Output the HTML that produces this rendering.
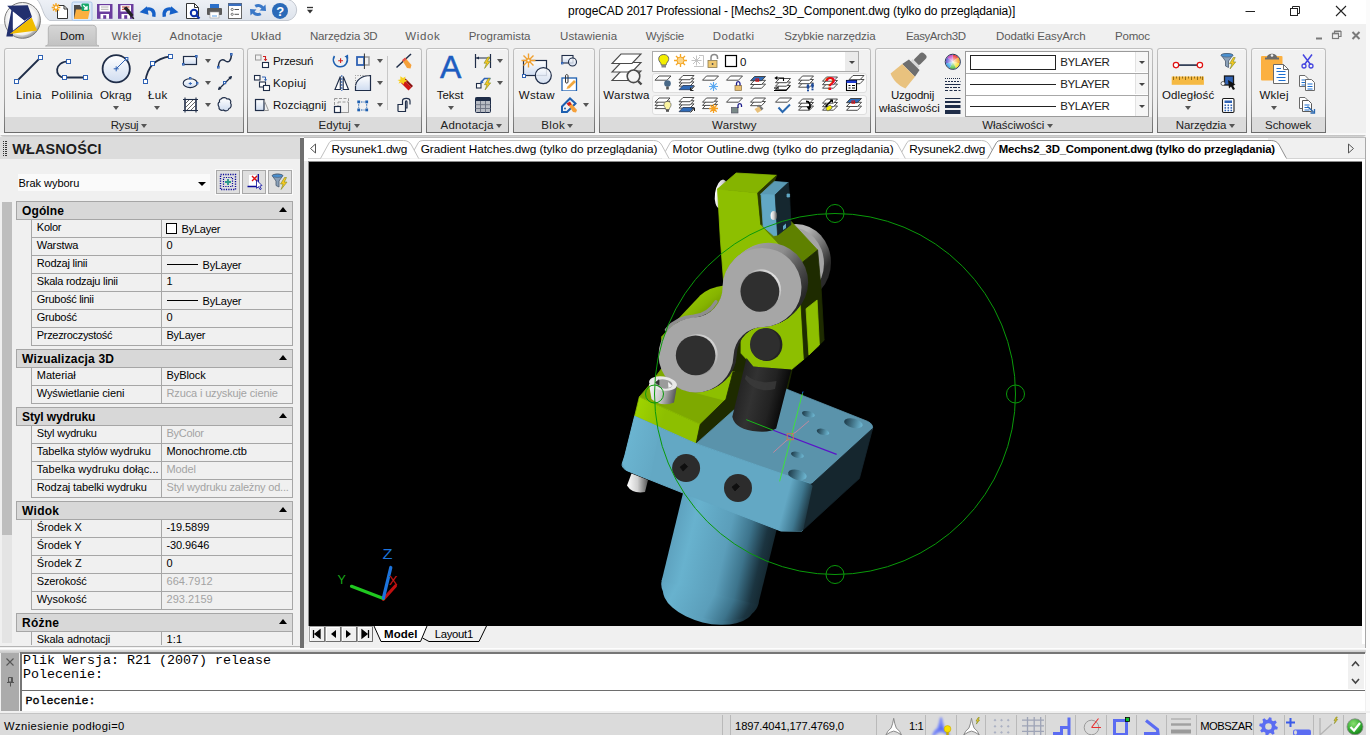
<!DOCTYPE html>
<html lang="pl">
<head>
<meta charset="utf-8">
<title>progeCAD 2017 Professional</title>
<style>
*{box-sizing:border-box;margin:0;padding:0}
html,body{width:1370px;height:735px;overflow:hidden}
body{position:relative;background:#f0f0f0;font-family:"Liberation Sans",sans-serif;font-size:12px;color:#000}
.abs{position:absolute}
#titlebar{position:absolute;left:0;top:0;width:1370px;height:24px;background:#fff}
#title{position:absolute;left:567px;top:3px;font-size:12.4px;white-space:nowrap;color:#000}
#qat{position:absolute;left:38px;top:-6px;width:252px;height:28px;border:1px solid #b9c0cc;border-radius:0 14px 14px 0;background:linear-gradient(#f4f7fb,#dde4ee)}
#tabs{position:absolute;left:0;top:24px;width:1366px;height:24px;background:#f0f0f0}
.rt{position:absolute;top:29px;font-size:12.3px;color:#5a5a5a;white-space:nowrap}
#domtab{position:absolute;left:48px;top:25px;width:49px;height:21px;background:linear-gradient(#d9d9d9,#c9c9c9);border:1px solid #bcbcbc;border-bottom:none;border-radius:4px 4px 0 0}
.panel{position:absolute;top:48px;height:85px;border:1px solid #c0c0c0;border-bottom-color:#6c6c6c;border-radius:3px 3px 0 0;background:#f1f1f1;box-shadow:inset 0 1px 0 #fbfbfb}
.panel::before,.panel::after{content:'';position:absolute;top:3px;bottom:-1px;width:1px;background:linear-gradient(#c0c0c0 0%,#a6a6a6 55%,#6c6c6c 100%)}
.panel::before{left:-1px}.panel::after{right:-1px}
.panel .pt{position:absolute;left:0;right:0;bottom:0;height:15px;background:#dbdbdb;text-align:center;font-size:12.3px;line-height:15px;color:#222;white-space:nowrap}
.lbl{position:absolute;font-size:12.3px;white-space:nowrap;color:#111}
.dd{position:absolute;width:0;height:0;border-left:3px solid transparent;border-right:3px solid transparent;border-top:4px solid #555}
#ribbonbottom{position:absolute;left:0;top:133px;width:1366px;height:4px;background:linear-gradient(#f6f6f6 0,#fafafa 45%,#c4c4c4 60%,#d6d6d6 100%);border-radius:0 0 4px 4px}
/* properties */
#props{position:absolute;left:0;top:138px;width:300px;height:510px;background:#f0f0f0}
#ptitle{position:absolute;left:12px;top:3px;font-weight:bold;font-size:13.6px;color:#222}
.ph{position:absolute;left:16px;width:277px;height:18px;background:#d9d9d9;border:1px solid #a9a9a9;font-weight:bold;font-size:11.6px;line-height:16px;padding-left:6px}
.pr{position:absolute;left:30px;width:263px;height:18px;border:1px solid #a9a9a9;border-top:none;font-size:11.1px;line-height:17px;background:#f0f0f0}
.pr .k{position:absolute;left:6px;top:0;white-space:nowrap;letter-spacing:-0.2px}
.pr .v{position:absolute;left:131px;top:0;width:131px;height:17px;border-left:1px solid #a9a9a9;padding-left:5px;white-space:nowrap;overflow:hidden;letter-spacing:-0.2px}
.pr .g{color:#a0a0a0}
.tri{position:absolute;right:5px;top:5px;width:0;height:0;border-left:4px solid transparent;border-right:4px solid transparent;border-bottom:5px solid #000}
/* doc tabs */
#doctabs{position:absolute;left:308px;top:138px;width:1054px;height:23px;background:#f0f0f0}
.dt{position:absolute;top:142px;font-size:12.3px;white-space:nowrap;color:#000}
#viewport{position:absolute;left:309px;top:162px;width:1053px;height:464px;background:#000;overflow:hidden}
#laytabs{position:absolute;left:311px;top:626px;width:1050px;height:17px;background:#f0f0f0}
#cmd{position:absolute;left:18px;top:652px;width:1347px;height:60px;background:#fff;border-top:1px solid #8a8a8a}
.mono{font-family:"Liberation Mono",monospace}
#status{position:absolute;left:0;top:715px;width:1370px;height:20px;background:#dcdcdc}
</style>
</head>
<body>
<div id="titlebar"></div>
<span class="abs" style="left:568.1px;top:3.0px;font:normal 12px 'Liberation Sans',sans-serif;line-height:16px;letter-spacing:-0.109px;color:#000;white-space:nowrap;">progeCAD 2017 Professional - [Mechs2_3D_Component.dwg (tylko do przeglądania)]</span>
<svg class="abs" style="left:0;top:0" width="320" height="24" viewBox="0 0 320 24"><defs><linearGradient id="qg" x1="0" y1="0" x2="0" y2="1"><stop offset="0" stop-color="#eef1f6"/><stop offset="1" stop-color="#dde3ec"/></linearGradient></defs><path d="M36.500 -1 C43 5 42 16 49.500 20.500 H288 A10.700 10.700 0 0 0 288 -0.500 Z" fill="url(#qg)" stroke="#c3c8d0" stroke-width="1"/></svg>
<div id="tabs"></div><div class="abs" style="left:1366px;top:0;width:4px;height:735px;background:#fbfbfb"></div>
<svg class="abs" style="left:40px;top:22px" width="64" height="26" viewBox="40 22 64 26"><defs><linearGradient id="dg" x1="0" y1="0" x2="0" y2="1"><stop offset="0" stop-color="#d6d6d6"/><stop offset="1" stop-color="#c2c2c2"/></linearGradient></defs><path d="M45.500 46 C48 45.500 48.300 44 48.300 42 V29 C48.300 26.500 49.500 25.300 52 25.300 H92.500 C95 25.300 96.200 26.500 96.200 29 V42 C96.200 44 96.500 45.500 99 46 Z" fill="url(#dg)" stroke="#b4b4b4" stroke-width="1"/></svg>
<span class="abs" style="left:60.1px;top:28.5px;font:normal 11.5px 'Liberation Sans',sans-serif;line-height:15px;letter-spacing:0.006px;color:#111;white-space:nowrap;">Dom</span>
<span class="abs" style="left:111.5px;top:28.5px;font:normal 11.5px 'Liberation Sans',sans-serif;line-height:15px;letter-spacing:0.355px;color:#5b5b5b;white-space:nowrap;">Wklej</span>
<span class="abs" style="left:169.6px;top:28.5px;font:normal 11.5px 'Liberation Sans',sans-serif;line-height:15px;letter-spacing:0.216px;color:#5b5b5b;white-space:nowrap;">Adnotacje</span>
<span class="abs" style="left:250.8px;top:28.5px;font:normal 11.5px 'Liberation Sans',sans-serif;line-height:15px;letter-spacing:0.259px;color:#5b5b5b;white-space:nowrap;">Układ</span>
<span class="abs" style="left:310.0px;top:28.5px;font:normal 11.5px 'Liberation Sans',sans-serif;line-height:15px;letter-spacing:-0.181px;color:#5b5b5b;white-space:nowrap;">Narzędzia 3D</span>
<span class="abs" style="left:405.3px;top:28.5px;font:normal 11.5px 'Liberation Sans',sans-serif;line-height:15px;letter-spacing:0.609px;color:#5b5b5b;white-space:nowrap;">Widok</span>
<span class="abs" style="left:468.7px;top:28.5px;font:normal 11.5px 'Liberation Sans',sans-serif;line-height:15px;letter-spacing:-0.018px;color:#5b5b5b;white-space:nowrap;">Programista</span>
<span class="abs" style="left:560.0px;top:28.5px;font:normal 11.5px 'Liberation Sans',sans-serif;line-height:15px;letter-spacing:0.095px;color:#5b5b5b;white-space:nowrap;">Ustawienia</span>
<span class="abs" style="left:645.7px;top:28.5px;font:normal 11.5px 'Liberation Sans',sans-serif;line-height:15px;letter-spacing:-0.174px;color:#5b5b5b;white-space:nowrap;">Wyjście</span>
<span class="abs" style="left:712.8px;top:28.5px;font:normal 11.5px 'Liberation Sans',sans-serif;line-height:15px;letter-spacing:0.386px;color:#5b5b5b;white-space:nowrap;">Dodatki</span>
<span class="abs" style="left:784.3px;top:28.5px;font:normal 11.5px 'Liberation Sans',sans-serif;line-height:15px;letter-spacing:-0.131px;color:#5b5b5b;white-space:nowrap;">Szybkie narzędzia</span>
<span class="abs" style="left:906.0px;top:28.5px;font:normal 11.5px 'Liberation Sans',sans-serif;line-height:15px;letter-spacing:-0.442px;color:#5b5b5b;white-space:nowrap;">EasyArch3D</span>
<span class="abs" style="left:996.0px;top:28.5px;font:normal 11.5px 'Liberation Sans',sans-serif;line-height:15px;letter-spacing:-0.125px;color:#5b5b5b;white-space:nowrap;">Dodatki EasyArch</span>
<span class="abs" style="left:1114.9px;top:28.5px;font:normal 11.5px 'Liberation Sans',sans-serif;line-height:15px;letter-spacing:-0.159px;color:#5b5b5b;white-space:nowrap;">Pomoc</span>
<div class="panel" style="left:4px;width:240px"><div class="pt"></div></div><span class="abs" style="left:110.8px;top:117.9px;font:normal 11.5px 'Liberation Sans',sans-serif;line-height:15px;letter-spacing:-0.233px;color:#222;white-space:nowrap;">Rysuj</span><i class="abs" style="left:140.7px;top:123.5px;width:0;height:0;border-left:3px solid transparent;border-right:3px solid transparent;border-top:4px solid #555"></i><span class="abs" style="left:16.1px;top:87.5px;font:normal 11.5px 'Liberation Sans',sans-serif;line-height:15px;letter-spacing:0.257px;color:#111;white-space:nowrap;">Linia</span><span class="abs" style="left:51.3px;top:87.5px;font:normal 11.5px 'Liberation Sans',sans-serif;line-height:15px;letter-spacing:0.229px;color:#111;white-space:nowrap;">Polilinia</span><span class="abs" style="left:100.0px;top:87.5px;font:normal 11.5px 'Liberation Sans',sans-serif;line-height:15px;letter-spacing:0.074px;color:#111;white-space:nowrap;">Okrąg</span><span class="abs" style="left:148.1px;top:87.5px;font:normal 11.5px 'Liberation Sans',sans-serif;line-height:15px;letter-spacing:0.318px;color:#111;white-space:nowrap;">Łuk</span><i class="abs" style="left:112.5px;top:106.0px;width:0;height:0;border-left:3px solid transparent;border-right:3px solid transparent;border-top:4px solid #555"></i><i class="abs" style="left:154.0px;top:106.0px;width:0;height:0;border-left:3px solid transparent;border-right:3px solid transparent;border-top:4px solid #555"></i><i class="abs" style="left:204.5px;top:59.0px;width:0;height:0;border-left:3px solid transparent;border-right:3px solid transparent;border-top:4px solid #555"></i><i class="abs" style="left:204.5px;top:81.0px;width:0;height:0;border-left:3px solid transparent;border-right:3px solid transparent;border-top:4px solid #555"></i><i class="abs" style="left:204.5px;top:103.0px;width:0;height:0;border-left:3px solid transparent;border-right:3px solid transparent;border-top:4px solid #555"></i>
<div class="panel" style="left:247px;width:175px"><div class="pt"></div></div><span class="abs" style="left:318.6px;top:117.9px;font:normal 11.5px 'Liberation Sans',sans-serif;line-height:15px;letter-spacing:0.055px;color:#222;white-space:nowrap;">Edytuj</span><i class="abs" style="left:354.3px;top:123.5px;width:0;height:0;border-left:3px solid transparent;border-right:3px solid transparent;border-top:4px solid #555"></i><span class="abs" style="left:273.0px;top:53.5px;font:normal 11.5px 'Liberation Sans',sans-serif;line-height:15px;letter-spacing:-0.312px;color:#111;white-space:nowrap;">Przesuń</span><span class="abs" style="left:273.0px;top:75.5px;font:normal 11.5px 'Liberation Sans',sans-serif;line-height:15px;letter-spacing:0.222px;color:#111;white-space:nowrap;">Kopiuj</span><span class="abs" style="left:273.0px;top:97.5px;font:normal 11.5px 'Liberation Sans',sans-serif;line-height:15px;letter-spacing:0.034px;color:#111;white-space:nowrap;">Rozciągnij</span><i class="abs" style="left:376.5px;top:59.0px;width:0;height:0;border-left:3px solid transparent;border-right:3px solid transparent;border-top:4px solid #555"></i><i class="abs" style="left:376.5px;top:81.0px;width:0;height:0;border-left:3px solid transparent;border-right:3px solid transparent;border-top:4px solid #555"></i><i class="abs" style="left:376.5px;top:103.0px;width:0;height:0;border-left:3px solid transparent;border-right:3px solid transparent;border-top:4px solid #555"></i><i class="abs" style="left:387px;top:56px;width:1px;height:54px;background:#c8c8c8"></i>
<div class="panel" style="left:426px;width:83px"><div class="pt"></div></div><span class="abs" style="left:440.5px;top:117.9px;font:normal 11.5px 'Liberation Sans',sans-serif;line-height:15px;letter-spacing:0.216px;color:#222;white-space:nowrap;">Adnotacja</span><i class="abs" style="left:496.2px;top:123.5px;width:0;height:0;border-left:3px solid transparent;border-right:3px solid transparent;border-top:4px solid #555"></i><span class="abs" style="left:436.8px;top:87.5px;font:normal 11.5px 'Liberation Sans',sans-serif;line-height:15px;letter-spacing:-0.069px;color:#111;white-space:nowrap;">Tekst</span><i class="abs" style="left:447.5px;top:106.0px;width:0;height:0;border-left:3px solid transparent;border-right:3px solid transparent;border-top:4px solid #555"></i><i class="abs" style="left:496.5px;top:59.0px;width:0;height:0;border-left:3px solid transparent;border-right:3px solid transparent;border-top:4px solid #555"></i><i class="abs" style="left:496.5px;top:81.0px;width:0;height:0;border-left:3px solid transparent;border-right:3px solid transparent;border-top:4px solid #555"></i><span class="abs" style="left:440.1px;top:46.0px;font:normal 32px 'Liberation Sans',sans-serif;line-height:42px;letter-spacing:2.256px;color:#1c5cc0;white-space:nowrap;-webkit-text-stroke:0.5px #1c5cc0;">A</span>
<div class="panel" style="left:512.5px;width:82px"><div class="pt"></div></div><span class="abs" style="left:541.2px;top:117.9px;font:normal 11.5px 'Liberation Sans',sans-serif;line-height:15px;letter-spacing:0.381px;color:#222;white-space:nowrap;">Blok</span><i class="abs" style="left:567.0px;top:123.5px;width:0;height:0;border-left:3px solid transparent;border-right:3px solid transparent;border-top:4px solid #555"></i><span class="abs" style="left:518.7px;top:87.5px;font:normal 11.5px 'Liberation Sans',sans-serif;line-height:15px;letter-spacing:0.360px;color:#111;white-space:nowrap;">Wstaw</span><i class="abs" style="left:582.5px;top:103.0px;width:0;height:0;border-left:3px solid transparent;border-right:3px solid transparent;border-top:4px solid #555"></i>
<div class="panel" style="left:598.5px;width:272px"><div class="pt"></div></div><span class="abs" style="left:712.1px;top:117.9px;font:normal 11.5px 'Liberation Sans',sans-serif;line-height:15px;letter-spacing:0.106px;color:#222;white-space:nowrap;">Warstwy</span><span class="abs" style="left:603.3px;top:87.5px;font:normal 11.5px 'Liberation Sans',sans-serif;line-height:15px;letter-spacing:0.298px;color:#111;white-space:nowrap;">Warstwa</span><div class="abs" style="left:652px;top:51px;width:207px;height:21px;background:#fff;border:1px solid #ababab"></div><div class="abs" style="left:845px;top:52px;width:13px;height:19px;background:#ebebeb"></div><i class="abs" style="left:848.5px;top:60.5px;width:0;height:0;border-left:3px solid transparent;border-right:3px solid transparent;border-top:3px solid #444"></i><div class="abs" style="left:652px;top:73px;width:215px;height:20px;background:#fafafa;border:1px solid #dedede;border-radius:3px"></div><div class="abs" style="left:652px;top:95px;width:215px;height:20px;background:#fafafa;border:1px solid #dedede;border-radius:3px"></div><span class="abs" style="left:740.0px;top:55.0px;font:normal 11.5px 'Liberation Sans',sans-serif;line-height:15px;letter-spacing:0.794px;color:#111;white-space:nowrap;">0</span>
<div class="panel" style="left:874.5px;width:278.5px"><div class="pt"></div></div><span class="abs" style="left:982.2px;top:117.9px;font:normal 11.5px 'Liberation Sans',sans-serif;line-height:15px;letter-spacing:-0.057px;color:#222;white-space:nowrap;">Właściwości</span><i class="abs" style="left:1047.2px;top:123.5px;width:0;height:0;border-left:3px solid transparent;border-right:3px solid transparent;border-top:4px solid #555"></i><span class="abs" style="left:890.9px;top:87.5px;font:normal 11.5px 'Liberation Sans',sans-serif;line-height:15px;letter-spacing:-0.206px;color:#111;white-space:nowrap;">Uzgodnij</span><span class="abs" style="left:879.0px;top:100.5px;font:normal 11.5px 'Liberation Sans',sans-serif;line-height:15px;letter-spacing:0.084px;color:#111;white-space:nowrap;">właściwości</span><div class="abs" style="left:965px;top:51px;width:184px;height:66px;background:#fff;border:1px solid #9a9a9a"></div><span class="abs" style="left:1060.3px;top:54.5px;font:normal 11.5px 'Liberation Sans',sans-serif;line-height:15px;letter-spacing:-0.443px;color:#222;white-space:nowrap;">BYLAYER</span><i class="abs" style="left:1135px;top:52px;width:13px;height:20px;background:#f6f6f6;border-left:1px solid #e2e2e2"></i><i class="abs" style="left:1138.5px;top:60.5px;width:0;height:0;border-left:3px solid transparent;border-right:3px solid transparent;border-top:3px solid #444"></i><i class="abs" style="left:966px;top:73px;width:182px;height:1px;background:#a8a8a8"></i><span class="abs" style="left:1060.3px;top:76.5px;font:normal 11.5px 'Liberation Sans',sans-serif;line-height:15px;letter-spacing:-0.443px;color:#222;white-space:nowrap;">BYLAYER</span><i class="abs" style="left:1135px;top:74px;width:13px;height:20px;background:#f6f6f6;border-left:1px solid #e2e2e2"></i><i class="abs" style="left:1138.5px;top:82.5px;width:0;height:0;border-left:3px solid transparent;border-right:3px solid transparent;border-top:3px solid #444"></i><i class="abs" style="left:966px;top:95px;width:182px;height:1px;background:#a8a8a8"></i><span class="abs" style="left:1060.3px;top:98.5px;font:normal 11.5px 'Liberation Sans',sans-serif;line-height:15px;letter-spacing:-0.443px;color:#222;white-space:nowrap;">BYLAYER</span><i class="abs" style="left:1135px;top:96px;width:13px;height:20px;background:#f6f6f6;border-left:1px solid #e2e2e2"></i><i class="abs" style="left:1138.5px;top:104.5px;width:0;height:0;border-left:3px solid transparent;border-right:3px solid transparent;border-top:3px solid #444"></i><div class="abs" style="left:970px;top:55px;width:86px;height:15px;background:#fff;border:1px solid #222"></div><i class="abs" style="left:970px;top:84px;width:86px;height:1px;background:#222"></i><i class="abs" style="left:970px;top:106px;width:86px;height:1px;background:#222"></i>
<div class="panel" style="left:1156.5px;width:90px"><div class="pt"></div></div><span class="abs" style="left:1175.8px;top:117.9px;font:normal 11.5px 'Liberation Sans',sans-serif;line-height:15px;letter-spacing:-0.142px;color:#222;white-space:nowrap;">Narzędzia</span><i class="abs" style="left:1229.3px;top:123.5px;width:0;height:0;border-left:3px solid transparent;border-right:3px solid transparent;border-top:4px solid #555"></i><span class="abs" style="left:1162.0px;top:87.5px;font:normal 11.5px 'Liberation Sans',sans-serif;line-height:15px;letter-spacing:0.140px;color:#111;white-space:nowrap;">Odległość</span><i class="abs" style="left:1184.6px;top:106.0px;width:0;height:0;border-left:3px solid transparent;border-right:3px solid transparent;border-top:4px solid #555"></i>
<div class="panel" style="left:1250.5px;width:75px"><div class="pt"></div></div><span class="abs" style="left:1265.1px;top:117.9px;font:normal 11.5px 'Liberation Sans',sans-serif;line-height:15px;letter-spacing:-0.082px;color:#222;white-space:nowrap;">Schowek</span><span class="abs" style="left:1259.5px;top:87.5px;font:normal 11.5px 'Liberation Sans',sans-serif;line-height:15px;letter-spacing:0.235px;color:#111;white-space:nowrap;">Wklej</span><i class="abs" style="left:1271.0px;top:106.0px;width:0;height:0;border-left:3px solid transparent;border-right:3px solid transparent;border-top:4px solid #555"></i><svg class="abs" style="left:0;top:0" width="1370" height="136" viewBox="0 0 1370 136"><defs><linearGradient id="lb" x1="0" y1="0" x2="0" y2="1"><stop offset="0" stop-color="#fff"/><stop offset="1" stop-color="#cfdcf0"/></linearGradient></defs><defs><radialGradient id="lg" cx=".4" cy=".35" r=".7"><stop offset="0" stop-color="#fff"/><stop offset=".75" stop-color="#e8e8e8"/><stop offset="1" stop-color="#8c8c8c"/></radialGradient></defs><circle cx="22.5" cy="20.4" r="17.9" fill="url(#lg)" stroke="#7a7a7a" stroke-width="1"/><circle cx="22.5" cy="20.4" r="15" fill="#fff" opacity=".55"/><path d="M7.2 5.700 L27.800 5.300 L31.700 15.900 L24.300 20.700 L12.900 11.400 L12.900 36.500 L6.300 36.500 L11.400 10.200 Z" fill="#22306e"/><path d="M12.900 11.400 L24.300 20.700 L12.900 28.500 Z" fill="#fff" opacity=".9"/><path d="M9.600 34.100 L31.700 16.500" stroke="#0a1a80" stroke-width="1.200"/><path d="M31.700 17.400 L37.100 30.500 L9.600 34.100 Z" fill="#f0bc00"/><path d="M57.5 5.5 H64 L67.5 9 V18.5 H57.5 Z" fill="#fff" stroke="#333" stroke-width="1"/><path d="M64 5.5 V9 H67.5" fill="none" stroke="#333" stroke-width="1"/><g stroke="#f5a623" stroke-width="1.6"><path d="M56 3.2 V11.8 M51.7 7.5 H60.3 M53 4.5 L59 10.5 M59 4.5 L53 10.5"/></g><circle cx="56" cy="7.5" r="1.2" fill="#fff"/><rect x="72" y="2" width="20" height="18.5" rx="1.5" fill="#dbe8f8" stroke="#a8c4e6" stroke-width="1"/><path d="M74 5 H80 L81 7 H88 V19 H74 Z" fill="#4a4a4a"/><path d="M74 19 L76 9.5 H90 L88 19 Z" fill="#fbb040"/><rect x="81.5" y="3.5" width="7.5" height="7.5" rx="1" fill="#17a86a"/><path d="M83.3 5.3 L87 9 M87 6 V9 H84" stroke="#fff" stroke-width="1.3" fill="none"/><rect x="97" y="4" width="15.500" height="14.800" fill="#6a3d9e"/><rect x="99.5" y="5.200" width="10.500" height="6.300" fill="#fff"/><rect x="100.5" y="14" width="8.500" height="4.800" fill="#fff"/><rect x="103.2" y="15.200" width="3" height="3.600" fill="#6a3d9e"/><path d="M101 7 H108.5 M101 9.300 H108.5" stroke="#b0b0b0" stroke-width="1"/><rect x="118" y="4" width="15.500" height="14.800" fill="#6a3d9e"/><rect x="120.5" y="5.200" width="10.500" height="6.300" fill="#fff"/><rect x="121.5" y="14" width="8.500" height="4.800" fill="#fff"/><rect x="124.2" y="15.200" width="3" height="3.600" fill="#6a3d9e"/><path d="M122 7 H129.5 M122 9.300 H129.5" stroke="#c0392b" stroke-width="1"/><path d="M123.5 8 L126.5 6.5 L133.5 15 L131 17.2 Z" fill="#222"/><path d="M131.5 16.5 L134 18.7" stroke="#222" stroke-width="1.2"/><path d="M153.800 16.700 C155 10.500 151 7.800 146.300 9.300" fill="none" stroke="#1560c8" stroke-width="3.400"/><path d="M139.600 12.300 L147 6.300 L148.600 14.800 Z" fill="#1560c8"/><path d="M164.300 16.700 C163.100 10.500 167.100 7.800 171.800 9.300" fill="none" stroke="#1560c8" stroke-width="3.400"/><path d="M178.500 12.300 L171.100 6.300 L169.500 14.800 Z" fill="#1560c8"/><path d="M186.500 3.500 H194.500 L198.500 7.500 V18.500 H186.500 Z" fill="#fff" stroke="#333" stroke-width="1"/><path d="M194.500 3.500 V7.500 H198.500" fill="none" stroke="#333"/><circle cx="194" cy="13" r="3.2" fill="#fff" stroke="#0b2fa8" stroke-width="2"/><path d="M196.500 15.500 L199.500 18.500" stroke="#0b2fa8" stroke-width="2.2"/><rect x="210" y="4" width="9" height="4.500" fill="#2a6fc9"/><rect x="207" y="8" width="15" height="7" rx="1" fill="#5a5a5a"/><rect x="210" y="12" width="9" height="6" fill="#fff" stroke="#999" stroke-width=".6"/><path d="M212 16 H217" stroke="#5aa0e8" stroke-width="1"/><rect x="228.500" y="3.500" width="13" height="15" fill="#fff" stroke="#666" stroke-width="1"/><rect x="228.500" y="3.500" width="13" height="2.500" fill="#3a6fc0"/><circle cx="232.200" cy="9.500" r="1.100" fill="none" stroke="#555" stroke-width=".8"/><circle cx="232.200" cy="14.300" r="1.100" fill="none" stroke="#555" stroke-width=".8"/><path d="M234.500 9.500 H239 M234.500 14.300 H239" stroke="#555" stroke-width="1"/><path d="M250 9 L256.500 9.500 L254.500 11.500 C256 13 258 13.500 260 12.500 L261.500 15 C258 17 254.500 16 252.500 13.500 L250.500 15.500 Z" fill="#3a78c8"/><path d="M266 13.500 L259.500 13 L261.500 11 C260 9.500 258 9 256 10 L254.500 7.500 C258 5.500 261.500 6.500 263.500 9 L265.500 7 Z" fill="#3a78c8" transform="translate(0 -2.500)"/><circle cx="280" cy="10.900" r="8" fill="#2a6ab8"/><text x="276.300" y="15.600" font-family="Liberation Sans,sans-serif" font-weight="bold" font-size="13" fill="#fff">?</text><path d="M307 7.500 H313" stroke="#333" stroke-width="1.300"/><path d="M307 9.800 H313 L310 13.500 Z" fill="#333"/><path d="M1245.500 11.500 H1255" stroke="#222" stroke-width="1"/><rect x="1290.500" y="8.500" width="7" height="7" fill="none" stroke="#222" stroke-width="1"/><path d="M1292.500 8.500 V6.500 H1299.500 V13.500 H1297.500" fill="none" stroke="#222" stroke-width="1"/><path d="M1336 6 L1346 16 M1346 6 L1336 16" stroke="#222" stroke-width="1.100"/><path d="M1316 38.500 H1322" stroke="#7a7a7a" stroke-width="2"/><rect x="1332.500" y="33.500" width="6" height="5" fill="none" stroke="#7a7a7a" stroke-width="1.200"/><path d="M1334.500 33 V31.500 H1341 V36.500 H1339" fill="none" stroke="#7a7a7a" stroke-width="1.200"/><path d="M1332 33.500 H1339 M1334 31.300 H1341" stroke="#7a7a7a" stroke-width="1.600"/><path d="M1352.500 32 L1359.500 39 M1359.500 32 L1352.500 39" stroke="#7a7a7a" stroke-width="2"/><path d="M16.500 81.500 L40.500 57.500" stroke="#1f2d48" stroke-width="1.800"/><rect x="14.5" y="79.5" width="4" height="4" fill="#fff" stroke="#2f62b4" stroke-width="1"/><rect x="38.5" y="55.5" width="4" height="4" fill="#fff" stroke="#2f62b4" stroke-width="1"/><path d="M68.600 61.300 C54 61.300 54 77.500 64.600 77.500 H85.400" fill="none" stroke="#1f2d48" stroke-width="1.800"/><rect x="66.5" y="59.5" width="4" height="4" fill="#fff" stroke="#2f62b4" stroke-width="1"/><rect x="62.5" y="75.5" width="4" height="4" fill="#fff" stroke="#2f62b4" stroke-width="1"/><rect x="83.5" y="75.5" width="4" height="4" fill="#fff" stroke="#2f62b4" stroke-width="1"/><circle cx="116.200" cy="68.800" r="13.600" fill="url(#lb)" stroke="#1f2d48" stroke-width="1.800"/><path d="M116.200 68.800 L126 59" stroke="#2f62b4" stroke-width="1"/><path d="M113.700 68.800 H118.700 M116.200 66.300 V71.300" stroke="#2f62b4" stroke-width="1"/><rect x="125.5" y="57.5" width="2.4" height="2.4" fill="#fff" stroke="#2f62b4" stroke-width="1"/><path d="M145.400 81.500 C147 68 155 58.500 170.500 56.400" fill="none" stroke="#1f2d48" stroke-width="1.800"/><rect x="143.5" y="79.5" width="4" height="4" fill="#fff" stroke="#2f62b4" stroke-width="1"/><rect x="150.5" y="61.5" width="4" height="4" fill="#fff" stroke="#2f62b4" stroke-width="1"/><rect x="168.5" y="54.5" width="4" height="4" fill="#fff" stroke="#2f62b4" stroke-width="1"/><rect x="183.500" y="56.500" width="13" height="8" fill="url(#lb)" stroke="#1f2d48" stroke-width="1.200"/><rect x="195.5" y="55.5" width="1.6" height="1.6" fill="#fff" stroke="#2f62b4" stroke-width="1"/><rect x="182.5" y="63.5" width="1.6" height="1.6" fill="#fff" stroke="#2f62b4" stroke-width="1"/><ellipse cx="190.200" cy="83.200" rx="7" ry="4.400" fill="url(#lb)" stroke="#1f2d48" stroke-width="1.100"/><rect x="189.5" y="77.5" width="1.4" height="1.4" fill="#fff" stroke="#2f62b4" stroke-width="1"/><rect x="196.5" y="82.5" width="1.4" height="1.4" fill="#fff" stroke="#2f62b4" stroke-width="1"/><path d="M188.700 83.500 H192 M190.300 82 V85" stroke="#2f62b4" stroke-width=".9"/><rect x="185" y="99.500" width="11" height="11" fill="#fff" stroke="#1f2d48" stroke-width="1.100"/><path d="M185 104 L189.500 99.500 M185 108 L193.500 99.500 M186.500 110.500 L196 101 M190.500 110.500 L196 105" stroke="#666" stroke-width="1"/><path d="M183 99.500 H198 M183 110.500 H198 M185 97.500 V112.500 M196 97.500 V112.500" stroke="#1f2d48" stroke-width="1.100"/><path d="M218.400 67.500 C218.500 58 223.500 59.500 225.500 61 C228.500 63 231.200 61 231.400 54.500" fill="none" stroke="#1f2d48" stroke-width="1.500"/><rect x="217.5" y="66.5" width="1.6" height="1.6" fill="#fff" stroke="#2f62b4" stroke-width="1"/><rect x="230.5" y="53.5" width="1.6" height="1.6" fill="#fff" stroke="#2f62b4" stroke-width="1"/><path d="M218.500 89.500 L231.500 76.500" stroke="#1f2d48" stroke-width="1.200"/><path d="M218 90 L219 86.300 L221.700 89 Z M232 76 L231 79.700 L228.300 77 Z" fill="#1f2d48"/><rect x="223.5" y="81.5" width="2.2" height="2.2" fill="#fff" stroke="#2f62b4" stroke-width="1"/><path d="M221 99 C223 97 226 97.500 227 99 C230 98.500 231.500 101 230.500 103 C232 105 231 108 229 108.500 C228.500 111 225 111.500 223.500 110 C221 111 218.500 109.500 219 107 C217.500 105 218 102.500 219.500 102 C219 100.500 220 99 221 99 Z" fill="url(#lb)" stroke="#1f2d48" stroke-width="1.200"/><rect x="255.500" y="55" width="5.500" height="5" fill="none" stroke="#999" stroke-width="1"/><rect x="262.500" y="62.500" width="6" height="5" fill="#fff" stroke="#1f2d48" stroke-width="1.100"/><path d="M263 56.500 H265.500 V60" fill="none" stroke="#d02020" stroke-width="1.100"/><path d="M263.700 59 H267.300 L265.500 61.300 Z" fill="#d02020"/><rect x="254.500" y="75.500" width="5.500" height="4.500" fill="#fff" stroke="#1f2d48" stroke-width="1.100"/><rect x="259.500" y="82" width="6" height="5" fill="#fff" stroke="#1f2d48" stroke-width="1.100"/><rect x="263.500" y="85.500" width="6" height="5" fill="#fff" stroke="#1f2d48" stroke-width="1.100"/><path d="M262 77 H265.500 V80" fill="none" stroke="#2f62b4" stroke-width="1"/><path d="M263.800 79.300 H267.200 L265.500 81.300 Z" fill="#2f62b4"/><rect x="255.500" y="99.500" width="8.500" height="11" fill="url(#lb)" stroke="#1f2d48" stroke-width="1.200"/><path d="M264 100 L268.500 110.500 H264" fill="none" stroke="#999" stroke-width="1"/><path d="M334.500 56 A7 7 0 1 0 346.800 57" fill="none" stroke="#1d5fb0" stroke-width="1.500"/><path d="M344.500 56.500 L348 54.500 L348.300 58.800 Z" fill="#1d5fb0"/><path d="M338.200 60.700 H343 M340.600 58.300 V63.100" stroke="#d02020" stroke-width="1.100"/><rect x="357" y="57" width="7" height="8" fill="none" stroke="#2f62b4" stroke-width="1.800"/><path d="M364.500 57 H369 V65 H364.500" fill="none" stroke="#9a9a9a" stroke-width="1.500"/><path d="M364.400 53.500 V69" stroke="#333" stroke-width="1"/><path d="M335 89.500 L340.300 76.500 V89.500 Z M348.500 89.500 L343.200 76.500 V89.500 Z" fill="#fff" stroke="#1f2d48" stroke-width="1.100"/><path d="M341.800 75 V91" stroke="#2f62b4" stroke-width="1" stroke-dasharray="2 1"/><path d="M355.500 90.500 V87 C355.500 80 362 75.500 370.500 75.500 V90.500 Z" fill="url(#lb)" stroke="#1f2d48" stroke-width="1.200"/><path d="M355.500 86 V75.500 H369" fill="none" stroke="#888" stroke-width="1" stroke-dasharray="1 1.500"/><rect x="334.500" y="98.500" width="14" height="14" fill="none" stroke="#999" stroke-width="1" stroke-dasharray="3 1.500"/><rect x="338" y="102" width="10.500" height="10.500" fill="none" stroke="#999" stroke-width="1" stroke-dasharray="3 1.500"/><rect x="334.500" y="106.500" width="6" height="6" fill="#fff" stroke="#1f2d48" stroke-width="1.200"/><rect x="357.3" y="100.5" width="2.800" height="2.800" fill="#1d5fb0"/><rect x="357.3" y="108.5" width="2.800" height="2.800" fill="#1d5fb0"/><rect x="365.3" y="100.5" width="2.800" height="2.800" fill="#1d5fb0"/><rect x="365.3" y="108.5" width="2.800" height="2.800" fill="#1d5fb0"/><path d="M361 102 H364.500 M361 110 H364.500 M358.700 104.200 V107.700 M366.700 104.200 V107.700" stroke="#1d5fb0" stroke-width="1" stroke-dasharray="1.500 1"/><path d="M396.500 67.500 L411 54" stroke="#1f2d48" stroke-width="1.500"/><path d="M402 60 L405 57.500 L411.500 65 L410.500 68.500 L407 68 Z" fill="#f5a03a"/><path d="M402 60 L405 57.500 L406.500 59.300 L403.500 61.800 Z" fill="#e05050"/><path d="M401 59.500 L406 55" stroke="#f0f0f0" stroke-width="2"/><path d="M401 83 L404 80 L411.500 87.500 L408.500 90.500 Z" fill="#d01818"/><path d="M404 80 L405.500 78.500 L413 86 L411.500 87.500 Z" fill="#8a1010"/><path d="M397.500 80 L400.500 79.500 L400.300 76.300 L403 78 L405.500 76.500 L405 79.500 L407.500 81 L404.500 82 L403.500 84.500 L401.500 82.500 L398.500 83.500 L399.800 81.300 Z" fill="#f8d020"/><path d="M398 111.500 V104.500 H402.500 V101 C402.500 97.500 410 97.500 410 101 V104.500" fill="none" stroke="#1f2d48" stroke-width="1.200"/><path d="M398 111.500 H405.500 V108 H407 V102 C407 100.500 405.500 100.500 405.500 102 V107.500" fill="none" stroke="#1f2d48" stroke-width="1.200"/><path d="M475.500 54 V68 M490.500 54 V68 M475.500 58 H490.500" stroke="#1f2d48" stroke-width="1.200" fill="none"/><path d="M476 58 L479 56.500 V59.500 Z" fill="#1f2d48"/><polygon points="487.8,57.0 484.0,63.2 486.5,63.2 484.6,68.4 490.2,61.4 487.6,61.4 489.7,57.0" fill="#f8c820" stroke="#7a8a20" stroke-width=".6"/><rect x="476.500" y="83.500" width="4.500" height="4.500" fill="#fff" stroke="#1f2d48" stroke-width="1.100"/><path d="M481 82.500 L484.500 78.500 H490.500" fill="none" stroke="#2f62b4" stroke-width="1.600"/><path d="M480 83.800 L481 80.300 L483.700 82.800 Z" fill="#2f62b4"/><polygon points="488.3,78.5 484.5,84.7 487.0,84.7 485.1,89.9 490.7,82.9 488.1,82.9 490.2,78.5" fill="#f8c820" stroke="#7a8a20" stroke-width=".6"/><rect x="475.500" y="97.500" width="15" height="15" rx="1" fill="#b8bcc4" stroke="#1f2d48" stroke-width="1"/><rect x="475.500" y="97.500" width="15" height="3.500" fill="#1f2d48"/><path d="M475.500 104.700 H490.500 M475.500 108.500 H490.500 M480.500 101 V112.500 M485.500 101 V112.500" stroke="#6a7080" stroke-width=".9"/><rect x="523.500" y="60.500" width="23" height="15" fill="url(#lb)" stroke="#1f2d48" stroke-width="1.200"/><circle cx="543.300" cy="75.600" r="8" fill="url(#lb)" stroke="#1f2d48" stroke-width="1.200" fill-opacity=".85"/><rect x="522.5" y="74.5" width="3" height="3" fill="#fff" stroke="#2f62b4" stroke-width="1"/><g stroke="#f0a030" stroke-width="1.400"><path d="M528.500 53.500 V67.500 M521.500 60.500 H535.500 M523.500 55.500 L533.500 65.500 M533.500 55.500 L523.500 65.500"/></g><circle cx="528.500" cy="60.500" r="2.500" fill="#f0a030"/><circle cx="528.500" cy="60.500" r="1.100" fill="#fff"/><rect x="562" y="55.500" width="11" height="7.500" fill="url(#lb)" stroke="#1f2d48" stroke-width="1.100"/><circle cx="572.500" cy="62" r="4" fill="url(#lb)" stroke="#1f2d48" stroke-width="1.100" fill-opacity=".8"/><rect x="561.5" y="62.5" width="1.4" height="1.4" fill="#fff" stroke="#2f62b4" stroke-width="1"/><rect x="562" y="78" width="14.500" height="13" fill="#fff" stroke="#1d5fb0" stroke-width="1.300"/><path d="M565.500 76 C565.500 74 568 74 568 76 V82 C568 83.500 565.500 83.500 565.500 82 Z" fill="none" stroke="#333" stroke-width="1"/><path d="M566.500 89 L567.500 86.500 L574 80 L576 82 L569.500 88.300 Z" fill="#f0a840"/><rect x="561" y="91" width="17" height="2" fill="#f3f3f3"/><path d="M562 106.500 L570 98.500 L575.500 103.500 L567 112 H562 Z" fill="none" stroke="#1d5fb0" stroke-width="2"/><circle cx="565" cy="108.500" r="1" fill="#1d5fb0"/><path d="M568 104.500 L570.500 102.500 L577 110 L576 112.500 L573 112 Z" fill="#f5a03a"/><path d="M566.500 103.500 L570 101.500 L571.500 104.500 L568.500 106 Z" fill="#d02020"/><path d="M621 71 H641 L632 80.5 H612 Z" fill="#fff" stroke="#4a4a4a" stroke-width="1.100"/><path d="M621 62.5 H641 L632 72 H612 Z" fill="#fff" stroke="#4a4a4a" stroke-width="1.100"/><path d="M621 54 H641 L632 63.5 H612 Z" fill="#fff" stroke="#4a4a4a" stroke-width="1.100"/><circle cx="633.500" cy="76.300" r="6.300" fill="#f4f4f4" stroke="#4a4a4a" stroke-width="1.600"/><path d="M638 81 L641.500 84.500" stroke="#4a4a4a" stroke-width="2.400"/><path d="M663.700 54.500 C668.500 54.500 670 59 667.500 62 C666.500 63.300 666.200 64 666.200 65 H661.200 C661.200 64 660.900 63.300 659.900 62 C657.400 59 658.900 54.500 663.700 54.500 Z" fill="#f4ee00" stroke="#666" stroke-width="1"/><rect x="661.500" y="65" width="4.500" height="2.500" fill="#888"/><g stroke="#f5a623" stroke-width="1.300"><path d="M680.500 54 V67 M674 60.500 H687 M676 56 L685 65 M685 56 L676 65"/></g><circle cx="680.500" cy="60.500" r="3.500" fill="#fbd58a" stroke="#f5a623" stroke-width="1"/><g stroke="#bdbdbd" stroke-width=".9"><path d="M696.500 55.500 V65.500 M691.500 60.500 H701.500 M693 57 L700 64 M700 57 L693 64"/><path d="M699 55.500 H703.500 V66.500 H694" fill="none"/></g><rect x="708" y="60.500" width="9" height="7" fill="#f0c870" stroke="#8a7a50" stroke-width=".8"/><path d="M711 60.500 V57.500 C711 53.500 717.500 53.500 717.500 57.500 V59" fill="none" stroke="#8a8a8a" stroke-width="1.500"/><rect x="711.800" y="63" width="1.500" height="2" fill="#555"/><rect x="725.500" y="55.500" width="11" height="11" fill="#fff" stroke="#000" stroke-width="1.200"/><path d="M659 76 H671 L667 80.2 H655 Z" fill="#fff" stroke="#3a3a3a" stroke-width=".9"/><circle cx="667.500" cy="83.500" r="3.300" fill="#4a6a88"/><rect x="666.200" y="86.500" width="2.600" height="3" fill="#555"/><path d="M683 81.9 H694 L690 86.1 H679 Z" fill="#fff" stroke="#3a3a3a" stroke-width=".9"/><path d="M683 78.7 H694 L690 82.9 H679 Z" fill="#fff" stroke="#3a3a3a" stroke-width=".9"/><path d="M683 75.5 H694 L690 79.7 H679 Z" fill="#fff" stroke="#3a3a3a" stroke-width=".9"/><path d="M683 85.500 H694 L690 89.700 H679 Z" fill="#2f6bb8" stroke="#1f2d48" stroke-width=".7"/><path d="M694.500 86 L690.500 90.500 M690.500 87.500 V90.500 H693.500" stroke="#222" stroke-width="1" fill="none"/><path d="M706.5 76 H718.5 L714.5 80.2 H702.5 Z" fill="#fff" stroke="#3a3a3a" stroke-width=".9"/><g stroke="#5aa8f0" stroke-width="1.100"><path d="M713.500 82 V91 M709 86.500 H718 M710.300 83.300 L716.700 89.700 M716.700 83.300 L710.300 89.700"/></g><path d="M730.5 76 H742.5 L738.5 80.2 H726.5 Z" fill="#fff" stroke="#3a3a3a" stroke-width=".9"/><rect x="735" y="85.500" width="6.500" height="5" fill="#e8c070" stroke="#8a7040" stroke-width=".7"/><path d="M736.500 85.500 V83.500 C736.500 81 740 81 740 83.500 V85.500" fill="none" stroke="#1a1a8a" stroke-width="1.300"/><path d="M754.5 84.1 H765.5 L761.5 88.3 H750.5 Z" fill="#fff" stroke="#3a3a3a" stroke-width=".9"/><path d="M754.5 80.3 H765.5 L761.5 84.5 H750.5 Z" fill="#fff" stroke="#3a3a3a" stroke-width=".9"/><path d="M754.5 76.5 H765.5 L761.5 80.7 H750.5 Z" fill="#2f6bb8" stroke="#3a3a3a" stroke-width=".9"/><rect x="756" y="79" width="2.600" height="2.200" fill="none" stroke="#e01010" stroke-width="1"/><path d="M779.5 85.5 H790.5 L786.5 89.7 H775.5 Z" fill="#fff" stroke="#3a3a3a" stroke-width=".9"/><path d="M779.5 82 H790.5 L786.5 86.2 H775.5 Z" fill="#fff" stroke="#3a3a3a" stroke-width=".9"/><path d="M779.5 78.5 H790.5 L786.5 82.7 H775.5 Z" fill="#fff" stroke="#3a3a3a" stroke-width=".9"/><path d="M776 78 H783.500 V81" fill="none" stroke="#000" stroke-width="1.100"/><path d="M774.300 78 L777.300 76 V80 Z" fill="#000"/><path d="M774 90.500 H786 L790 86" stroke="#000" stroke-width="1.100" fill="none"/><path d="M774 88 H779" stroke="#000" stroke-width="1.100"/><path d="M802.5 83 H813.5 L809.5 87.2 H798.5 Z" fill="#fff" stroke="#3a3a3a" stroke-width=".9"/><path d="M802.5 79.5 H813.5 L809.5 83.7 H798.5 Z" fill="#fff" stroke="#3a3a3a" stroke-width=".9"/><path d="M802.5 76 H813.5 L809.5 80.2 H798.5 Z" fill="#fff" stroke="#3a3a3a" stroke-width=".9"/><ellipse cx="808" cy="86.500" rx="1.400" ry="2.600" fill="#1d4a9a"/><ellipse cx="812.500" cy="85.500" rx="1.400" ry="2.600" fill="#1d4a9a"/><rect x="807" y="89.500" width="2" height="1.800" fill="#1d4a9a"/><rect x="811.500" y="88.500" width="2" height="1.800" fill="#1d4a9a"/><path d="M826.5 84 H837.5 L833.5 88.2 H822.5 Z" fill="#fff" stroke="#3a3a3a" stroke-width=".9"/><path d="M826.5 80.5 H837.5 L833.5 84.7 H822.5 Z" fill="#fff" stroke="#3a3a3a" stroke-width=".9"/><path d="M826.5 77 H837.5 L833.5 81.2 H822.5 Z" fill="#fff" stroke="#3a3a3a" stroke-width=".9"/><text x="824.600" y="90" font-family="Liberation Sans,sans-serif" font-weight="bold" font-size="19" fill="#e81010">?</text><path d="M853 79.5 H864 L860 83.7 H849 Z" fill="#fff" stroke="#3a3a3a" stroke-width=".9"/><path d="M853 75.5 H864 L860 79.7 H849 Z" fill="#fff" stroke="#3a3a3a" stroke-width=".9"/><rect x="846.500" y="80.500" width="10" height="10" fill="#fff" stroke="#000" stroke-width="1.100"/><rect x="846.500" y="80.500" width="10" height="2.500" fill="#1d3ad0"/><path d="M848.500 85.500 H850.500 M852 85.500 H855 M848.500 88 H850.500 M852 88 H855" stroke="#000" stroke-width="1"/><path d="M659 104.4 H670 L666 108.6 H655 Z" fill="#fff" stroke="#3a3a3a" stroke-width=".9"/><path d="M659 101.2 H670 L666 105.4 H655 Z" fill="#fff" stroke="#3a3a3a" stroke-width=".9"/><path d="M659 98 H670 L666 102.2 H655 Z" fill="#fff" stroke="#3a3a3a" stroke-width=".9"/><path d="M667.500 101.500 C671 101.500 672 105 670 107.500 C669.500 108.200 669.300 109 669.300 109.500 H665.700 C665.700 109 665.500 108.200 665 107.500 C663 105 664 101.500 667.500 101.500 Z" fill="#fbf4a0" stroke="#555" stroke-width=".7"/><rect x="666" y="109.500" width="3" height="2.300" fill="#555"/><path d="M683 103.9 H694 L690 108.1 H679 Z" fill="#fff" stroke="#3a3a3a" stroke-width=".9"/><path d="M683 100.7 H694 L690 104.9 H679 Z" fill="#fff" stroke="#3a3a3a" stroke-width=".9"/><path d="M683 97.5 H694 L690 101.7 H679 Z" fill="#fff" stroke="#3a3a3a" stroke-width=".9"/><path d="M683 107.500 H694 L690 111.700 H679 Z" fill="#2f6bb8" stroke="#1f2d48" stroke-width=".7"/><path d="M690.500 112.500 L694.500 108 M691.500 108 H694.500 V111" stroke="#222" stroke-width="1" fill="none"/><path d="M706.5 104.4 H717.5 L713.5 108.6 H702.5 Z" fill="#fff" stroke="#3a3a3a" stroke-width=".9"/><path d="M706.5 101.2 H717.5 L713.5 105.4 H702.5 Z" fill="#fff" stroke="#3a3a3a" stroke-width=".9"/><path d="M706.5 98 H717.5 L713.5 102.2 H702.5 Z" fill="#fff" stroke="#3a3a3a" stroke-width=".9"/><g stroke="#f5a020" stroke-width="1.300"><path d="M713.500 104 V113 M709 108.500 H718 M710.300 105.300 L716.700 111.700 M716.700 105.300 L710.300 111.700"/></g><circle cx="713.500" cy="108.500" r="2" fill="#f5a020"/><path d="M730.5 98 H742.5 L738.5 102.2 H726.5 Z" fill="#fff" stroke="#3a3a3a" stroke-width=".9"/><rect x="731.500" y="107.500" width="6.500" height="5.500" fill="#7a8a88" stroke="#556" stroke-width=".7"/><path d="M738 108 V105.500 C738 103 741.500 103 741.500 105.500 V107" fill="none" stroke="#1a1a8a" stroke-width="1.300"/><path d="M754.5 101.5 H765.5 L761.5 105.7 H750.5 Z" fill="#fff" stroke="#3a3a3a" stroke-width=".9"/><path d="M754.5 98 H765.5 L761.5 102.2 H750.5 Z" fill="#fff" stroke="#3a3a3a" stroke-width=".9"/><path d="M759 104.500 L763.500 108.500 L761.500 110.500 L757 106.500 Z" fill="#777"/><path d="M754.500 109 L759 106.500 L761.500 110.500 L757.500 113 Z" fill="#e8c07a"/><path d="M779.5 98 H791.5 L787.5 102.2 H775.5 Z" fill="#fff" stroke="#3a3a3a" stroke-width=".9"/><path d="M778.500 107.500 L782.500 112 L790 104.500" fill="none" stroke="#2a68b0" stroke-width="2"/><path d="M802.5 106 H813.5 L809.5 110.2 H798.5 Z" fill="#fff" stroke="#3a3a3a" stroke-width=".9"/><path d="M802.5 102.5 H813.5 L809.5 106.7 H798.5 Z" fill="#fff" stroke="#3a3a3a" stroke-width=".9"/><path d="M802.5 99 H813.5 L809.5 103.2 H798.5 Z" fill="#fff" stroke="#3a3a3a" stroke-width=".9"/><path d="M806 101.500 C809.500 101.500 811 104.500 809.500 107.500" fill="none" stroke="#000" stroke-width="1.800"/><path d="M806.500 106.500 L811.500 106.500 L809 110.500 Z" fill="#000"/><path d="M826.5 106 H837.5 L833.5 110.2 H822.5 Z" fill="#fff" stroke="#3a3a3a" stroke-width=".9"/><path d="M826.5 102.5 H837.5 L833.5 106.7 H822.5 Z" fill="#fff" stroke="#3a3a3a" stroke-width=".9"/><path d="M826.5 99 H837.5 L833.5 103.2 H822.5 Z" fill="#fff" stroke="#3a3a3a" stroke-width=".9"/><path d="M826.500 105.500 L832 100" stroke="#000" stroke-width="1.500"/><path d="M829.500 99.500 H833 V103 Z M825.500 103.500 V107 H829 Z" fill="#000"/><rect x="826" y="106" width="6" height="4" rx="1.500" fill="#f4ee00" stroke="#555" stroke-width=".7" transform="rotate(-35 829 108)"/><path d="M850.5 106.1 H861.5 L857.5 110.3 H846.5 Z" fill="#fff" stroke="#3a3a3a" stroke-width=".9"/><path d="M850.5 102.3 H861.5 L857.5 106.5 H846.5 Z" fill="#fff" stroke="#3a3a3a" stroke-width=".9"/><path d="M850.5 98.5 H861.5 L857.5 102.7 H846.5 Z" fill="#2f6bb8" stroke="#3a3a3a" stroke-width=".9"/><rect x="852" y="101" width="2.600" height="2.200" fill="none" stroke="#e01010" stroke-width="1"/><g transform="rotate(45 910 69)"><rect x="906" y="48" width="8" height="13" rx="3" fill="#6e6e6e"/><rect x="905" y="60" width="10" height="3" fill="#d8d8d8"/><path d="M902.500 63 H917.500 L919 71 H901 Z" fill="#6e6e6e"/><path d="M901 71 H919 L920.500 86 C914 89 906 89 899.500 86 Z" fill="#e9c27e"/></g><path d="M952.8 61.8 L952.80 54.60 A7.2 7.2 0 0 1 958.43 57.31 Z" fill="#e83030"/><path d="M952.8 61.8 L958.43 57.31 A7.2 7.2 0 0 1 959.82 63.40 Z" fill="#f5a020"/><path d="M952.8 61.8 L959.82 63.40 A7.2 7.2 0 0 1 955.92 68.29 Z" fill="#f8e020"/><path d="M952.8 61.8 L955.92 68.29 A7.2 7.2 0 0 1 949.68 68.29 Z" fill="#50c040"/><path d="M952.8 61.8 L949.68 68.29 A7.2 7.2 0 0 1 945.78 63.40 Z" fill="#30a0e8"/><path d="M952.8 61.8 L945.78 63.40 A7.2 7.2 0 0 1 947.17 57.31 Z" fill="#6050d0"/><path d="M952.8 61.8 L947.17 57.31 A7.2 7.2 0 0 1 952.80 54.60 Z" fill="#c040c0"/><defs><radialGradient id="cw"><stop offset="0" stop-color="#fff" stop-opacity=".9"/><stop offset="1" stop-color="#fff" stop-opacity="0"/></radialGradient></defs><circle cx="952.800" cy="61.800" r="7.200" fill="url(#cw)"/><circle cx="952.800" cy="61.800" r="7.600" fill="none" stroke="#2a3a5a" stroke-width="1"/><g stroke="#1f2d48" stroke-width="1"><path d="M945 78.500 H960.500" stroke-dasharray="1 1"/><path d="M945 81.500 H960.500" stroke-dasharray="2 1"/><path d="M945 84.500 H960.500"/><path d="M945 87.500 H960.500" stroke-dasharray="4 1 2 1"/><path d="M945 90.500 H960.500" stroke-dasharray="3 1.500"/></g><g stroke="#1f2d48"><path d="M945 98.500 H960.500" stroke-width="1"/><path d="M945 102 H960.500" stroke-width="2"/><path d="M945 106.500 H960.500" stroke-width="3"/><path d="M945 112 H960.500" stroke-width="4"/></g><path d="M1176 65.100 H1200" stroke="#1f2d48" stroke-width="1.600"/><circle cx="1176" cy="65.100" r="2.700" fill="#fff" stroke="#e01010" stroke-width="1.200"/><circle cx="1199.900" cy="65.100" r="2.700" fill="#fff" stroke="#e01010" stroke-width="1.200"/><rect x="1171.700" y="76.500" width="32.200" height="8.300" fill="#f5b942"/><path d="M1173.500 76.500 V80 M1176.500 76.500 V78.500 M1179.500 76.500 V80 M1182.500 76.500 V78.500 M1185.500 76.500 V80 M1188.500 76.500 V78.500 M1191.500 76.500 V80 M1194.500 76.500 V78.500 M1197.500 76.500 V80 M1200.500 76.500 V78.500 M1202.500 76.500 V80" stroke="#7a5a10" stroke-width=".8"/><path d="M1221 55 C1224 53 1230 53 1233 55 L1228.500 61 V67.500 L1225.500 66 V61 Z" fill="#8aa0b8" stroke="#4a5a70" stroke-width=".8"/><ellipse cx="1227" cy="55.300" rx="6" ry="1.800" fill="#4a90d0" stroke="#4a5a70" stroke-width=".6"/><polygon points="1233.3,57.5 1229.5,63.7 1232.0,63.7 1230.1,68.9 1235.7,61.9 1233.1,61.9 1235.2,57.5" fill="#f8c820" stroke="#7a8a20" stroke-width=".6"/><rect x="1224.500" y="76" width="9" height="9" fill="#2f62b4" stroke="#1a1a1a" stroke-width="1.300"/><circle cx="1223" cy="83.500" r="2" fill="#fff" stroke="#444" stroke-width=".8"/><path d="M1228 80 L1235.500 84.500 L1232.800 85.300 L1235 89 L1233 90 L1231 86.500 L1229 88.500 Z" fill="#111"/><rect x="1222.500" y="98.500" width="11.500" height="14" rx="1.200" fill="#fff" stroke="#1a1a1a" stroke-width="1.100"/><rect x="1224.500" y="100.500" width="7.500" height="2.500" fill="#2f62b4"/><rect x="1224.5" y="104.5" width="1.600" height="1.600" fill="#2f62b4"/><rect x="1224.5" y="107.1" width="1.600" height="1.600" fill="#2f62b4"/><rect x="1224.5" y="109.7" width="1.600" height="1.600" fill="#2f62b4"/><rect x="1227.5" y="104.5" width="1.600" height="1.600" fill="#2f62b4"/><rect x="1227.5" y="107.1" width="1.600" height="1.600" fill="#2f62b4"/><rect x="1227.5" y="109.7" width="1.600" height="1.600" fill="#2f62b4"/><rect x="1230.5" y="104.5" width="1.600" height="1.600" fill="#2f62b4"/><rect x="1230.5" y="107.1" width="1.600" height="1.600" fill="#2f62b4"/><rect x="1230.5" y="109.7" width="1.600" height="1.600" fill="#2f62b4"/><rect x="1261" y="56" width="21.500" height="24.500" rx="1" fill="#fbb040"/><path d="M1267 57.500 C1267 52.500 1277 52.500 1277 57.500 H1279 V59.500 H1265 V57.500 Z" fill="#6a6a6a"/><circle cx="1272" cy="55.500" r="1.300" fill="#f3f3f3"/><path d="M1273.500 64.500 H1283.500 L1288.500 69.500 V83.500 H1273.500 Z" fill="#fff" stroke="#6a6a6a" stroke-width="1"/><path d="M1283.500 64.500 V69.500 H1288.500" fill="none" stroke="#6a6a6a" stroke-width="1"/><path d="M1276.500 68.500 H1281 M1276.500 71.500 H1285.500 M1278.500 74.500 H1285.500 M1276.500 77.500 H1285.500 M1278.500 80.500 H1285.500" stroke="#1d6fd0" stroke-width="1.100"/><path d="M1303 54.500 L1310.500 64.500 M1312 54.500 L1304.500 64.500" stroke="#4646e0" stroke-width="1.500"/><circle cx="1304" cy="66" r="2" fill="none" stroke="#4646e0" stroke-width="1.300"/><circle cx="1311" cy="66" r="2" fill="none" stroke="#4646e0" stroke-width="1.300"/><path d="M1299.5 75.5 H1305 L1308 78.5 V86.5 H1299.5 Z" fill="#fff" stroke="#6a6a6a" stroke-width="1"/><path d="M1301.5 80 H1306" stroke="#1d6fd0" stroke-width="1"/><path d="M1301.5 82.5 H1306" stroke="#1d6fd0" stroke-width="1"/><path d="M1301.5 85 H1306" stroke="#1d6fd0" stroke-width="1"/><path d="M1305.5 79.5 H1311.5 L1314.5 82.5 V90.5 H1305.5 Z" fill="#fff" stroke="#6a6a6a" stroke-width="1"/><path d="M1307.5 84 H1312.5" stroke="#1d6fd0" stroke-width="1"/><path d="M1307.5 86.5 H1312.5" stroke="#1d6fd0" stroke-width="1"/><path d="M1307.5 89 H1312.5" stroke="#1d6fd0" stroke-width="1"/><path d="M1299.5 97.5 H1305 L1308 100.5 V108.5 H1299.5 Z" fill="#fff" stroke="#6a6a6a" stroke-width="1"/><path d="M1302.5 100.5 H1308.5 L1311.5 103.5 V111.5 H1302.5 Z" fill="#fff" stroke="#5a5a5a" stroke-width="1"/><path d="M1304.5 105 H1309.5" stroke="#1d6fd0" stroke-width="1"/><path d="M1304.5 107.5 H1309.5" stroke="#1d6fd0" stroke-width="1"/><path d="M1304.5 110 H1309.5" stroke="#1d6fd0" stroke-width="1"/><path d="M1307.500 106.500 L1313.500 112" stroke="#2a68b0" stroke-width="1.300"/><path d="M1314.500 109 V113 H1310.500" fill="none" stroke="#2a68b0" stroke-width="1.300"/></svg>
<div id="ribbonbottom"></div>
<div class="abs" style="left:0;top:137px;width:300px;height:22px;background:#dcdcdc"></div>
<div class="abs" style="left:3px;top:141px;width:1.4px;height:16px;background:repeating-linear-gradient(#333 0 1px,transparent 1px 2px)"></div><div class="abs" style="left:5.2px;top:141px;width:1.4px;height:16px;background:repeating-linear-gradient(#333 0 1px,transparent 1px 2px)"></div>
<span class="abs" style="left:12.2px;top:139.5px;font:bold 14.4px 'Liberation Sans',sans-serif;line-height:19px;letter-spacing:0.172px;color:#1c1c1c;white-space:nowrap;">WŁASNOŚCI</span>
<div class="abs" style="left:300px;top:138px;width:4px;height:510px;background:#707070"></div>
<div class="abs" style="left:304px;top:138px;width:4px;height:514px;background:#fff"></div>
<div class="abs" style="left:18px;top:174px;width:192px;height:17px;background:#fafafa"></div>
<span class="abs" style="left:18.5px;top:176.0px;font:normal 11px 'Liberation Sans',sans-serif;line-height:14px;letter-spacing:-0.031px;color:#000;white-space:nowrap;">Brak wyboru</span>
<i class="abs" style="left:198.0px;top:181.5px;width:0;height:0;border-left:4px solid transparent;border-right:4px solid transparent;border-top:4px solid #000"></i>
<div class="abs" style="left:216px;top:170px;width:24px;height:24px;background:#dfdfdf;border:1px solid #a8a8a8;box-shadow:0 0 0 1px #fafafa"></div>
<div class="abs" style="left:242px;top:170px;width:24px;height:24px;background:#dfdfdf;border:1px solid #a8a8a8;box-shadow:0 0 0 1px #fafafa"></div>
<div class="abs" style="left:268px;top:170px;width:24px;height:24px;background:#dfdfdf;border:1px solid #a8a8a8;box-shadow:0 0 0 1px #fafafa"></div>
<svg class="abs" style="left:0;top:0" width="300" height="200" viewBox="0 0 300 200"><rect x="220.500" y="174.500" width="15" height="15" fill="none" stroke="#0a0a9a" stroke-width="1.400" stroke-dasharray="1.200 1.200"/><rect x="223.500" y="177.500" width="9" height="9" fill="none" stroke="#0a0a9a" stroke-width="1.200" stroke-dasharray="1.200 1.200"/><path d="M225 182 H231 M228 179 V185" stroke="#2a9a8a" stroke-width="1.800"/><rect x="249" y="175" width="7" height="11" fill="#fff"/><path d="M258.300 174 V186.500 H247.500" fill="none" stroke="#0a0a9a" stroke-width="1.300"/><path d="M252 176 L257 181 M257 176 L252 181" stroke="#e01010" stroke-width="1.400"/><path d="M256.500 180 L262 185.500 L259.800 186 L261.300 189 L260 189.600 L258.600 186.700 L256.500 188.300 Z" fill="#fff" stroke="#0a0a9a" stroke-width=".8"/><path d="M272 175.500 C274.500 173.500 280.500 173.500 283 175.500 L279 181 V187 L276 185.500 V181 Z" fill="#8aa0b8" stroke="#4a5a70" stroke-width=".8"/><ellipse cx="277.500" cy="175.800" rx="5.200" ry="1.600" fill="#4a90d0" stroke="#4a5a70" stroke-width=".6"/><polygon points="284.5,177.5 280.5,184.0 283.1,184.0 281.1,189.5 287.0,182.1 284.3,182.1 286.5,177.5" fill="#f8c820" stroke="#7a8a20" stroke-width=".6"/></svg>
<div class="abs" style="left:2px;top:202px;width:10px;height:441px;background:#e4e4e4"></div>
<div class="abs" style="left:2px;top:202px;width:10px;height:333px;background:#bebebe"></div>
<div class="abs" style="left:16px;top:201px;width:277px;height:19px;background:#d8d8d8;border:1px solid #a6a6a6"></div><span class="abs" style="left:22.1px;top:202.5px;font:bold 12px 'Liberation Sans',sans-serif;line-height:16px;letter-spacing:0.076px;color:#000;white-space:nowrap;">Ogólne</span><i class="abs" style="left:279px;top:207px;width:0;height:0;border-left:4px solid transparent;border-right:4px solid transparent;border-bottom:5px solid #000"></i>
<div class="abs" style="left:31px;top:219px;width:262px;height:19px;border:1px solid #a6a6a6;background:#f0f0f0"></div><i class="abs" style="left:161px;top:220px;width:1px;height:18px;background:#a6a6a6"></i><span class="abs" style="left:36.8px;top:220.4px;font:normal 11px 'Liberation Sans',sans-serif;line-height:14px;letter-spacing:-0.237px;color:#000;white-space:nowrap;">Kolor</span><span class="abs" style="left:181.6px;top:221.9px;font:normal 11px 'Liberation Sans',sans-serif;line-height:14px;letter-spacing:-0.251px;color:#000;white-space:nowrap;">ByLayer</span><i class="abs" style="left:166px;top:223px;width:11px;height:11px;background:#fff;border:1px solid #000"></i>
<div class="abs" style="left:31px;top:237px;width:262px;height:19px;border:1px solid #a6a6a6;background:#f0f0f0"></div><i class="abs" style="left:161px;top:238px;width:1px;height:18px;background:#a6a6a6"></i><span class="abs" style="left:36.8px;top:238.4px;font:normal 11px 'Liberation Sans',sans-serif;line-height:14px;letter-spacing:-0.139px;color:#000;white-space:nowrap;">Warstwa</span><span class="abs" style="left:166.5px;top:238.4px;font:normal 11px 'Liberation Sans',sans-serif;line-height:14px;letter-spacing:0.575px;color:#000;white-space:nowrap;">0</span>
<div class="abs" style="left:31px;top:255px;width:262px;height:19px;border:1px solid #a6a6a6;background:#f0f0f0"></div><i class="abs" style="left:161px;top:256px;width:1px;height:18px;background:#a6a6a6"></i><span class="abs" style="left:36.8px;top:256.4px;font:normal 11px 'Liberation Sans',sans-serif;line-height:14px;letter-spacing:-0.234px;color:#000;white-space:nowrap;">Rodzaj linii</span><span class="abs" style="left:202.6px;top:257.9px;font:normal 11px 'Liberation Sans',sans-serif;line-height:14px;letter-spacing:-0.251px;color:#000;white-space:nowrap;">ByLayer</span><i class="abs" style="left:167px;top:264px;width:31px;height:1px;background:#000"></i>
<div class="abs" style="left:31px;top:273px;width:262px;height:19px;border:1px solid #a6a6a6;background:#f0f0f0"></div><i class="abs" style="left:161px;top:274px;width:1px;height:18px;background:#a6a6a6"></i><span class="abs" style="left:36.8px;top:274.4px;font:normal 11px 'Liberation Sans',sans-serif;line-height:14px;letter-spacing:-0.248px;color:#000;white-space:nowrap;">Skala rodzaju linii</span><span class="abs" style="left:166.5px;top:274.4px;font:normal 11px 'Liberation Sans',sans-serif;line-height:14px;letter-spacing:-0.425px;color:#000;white-space:nowrap;">1</span>
<div class="abs" style="left:31px;top:291px;width:262px;height:19px;border:1px solid #a6a6a6;background:#f0f0f0"></div><i class="abs" style="left:161px;top:292px;width:1px;height:18px;background:#a6a6a6"></i><span class="abs" style="left:36.8px;top:292.4px;font:normal 11px 'Liberation Sans',sans-serif;line-height:14px;letter-spacing:-0.279px;color:#000;white-space:nowrap;">Grubość linii</span><span class="abs" style="left:202.6px;top:293.9px;font:normal 11px 'Liberation Sans',sans-serif;line-height:14px;letter-spacing:-0.251px;color:#000;white-space:nowrap;">ByLayer</span><i class="abs" style="left:167px;top:300px;width:31px;height:1px;background:#000"></i>
<div class="abs" style="left:31px;top:309px;width:262px;height:19px;border:1px solid #a6a6a6;background:#f0f0f0"></div><i class="abs" style="left:161px;top:310px;width:1px;height:18px;background:#a6a6a6"></i><span class="abs" style="left:36.8px;top:310.4px;font:normal 11px 'Liberation Sans',sans-serif;line-height:14px;letter-spacing:-0.240px;color:#000;white-space:nowrap;">Grubość</span><span class="abs" style="left:166.5px;top:310.4px;font:normal 11px 'Liberation Sans',sans-serif;line-height:14px;letter-spacing:0.575px;color:#000;white-space:nowrap;">0</span>
<div class="abs" style="left:31px;top:327px;width:262px;height:19px;border:1px solid #a6a6a6;background:#f0f0f0"></div><i class="abs" style="left:161px;top:328px;width:1px;height:18px;background:#a6a6a6"></i><span class="abs" style="left:36.8px;top:328.4px;font:normal 11px 'Liberation Sans',sans-serif;line-height:14px;letter-spacing:-0.312px;color:#000;white-space:nowrap;">Przezroczystość</span><span class="abs" style="left:166.5px;top:328.4px;font:normal 11px 'Liberation Sans',sans-serif;line-height:14px;letter-spacing:-0.237px;color:#000;white-space:nowrap;">ByLayer</span>
<div class="abs" style="left:16px;top:349px;width:277px;height:19px;background:#d8d8d8;border:1px solid #a6a6a6"></div><span class="abs" style="left:22.1px;top:350.5px;font:bold 12px 'Liberation Sans',sans-serif;line-height:16px;letter-spacing:0.189px;color:#000;white-space:nowrap;">Wizualizacja 3D</span><i class="abs" style="left:279px;top:355px;width:0;height:0;border-left:4px solid transparent;border-right:4px solid transparent;border-bottom:5px solid #000"></i>
<div class="abs" style="left:31px;top:367px;width:262px;height:19px;border:1px solid #a6a6a6;background:#f0f0f0"></div><i class="abs" style="left:161px;top:368px;width:1px;height:18px;background:#a6a6a6"></i><span class="abs" style="left:36.8px;top:368.4px;font:normal 11px 'Liberation Sans',sans-serif;line-height:14px;letter-spacing:-0.028px;color:#000;white-space:nowrap;">Materiał</span><span class="abs" style="left:166.5px;top:368.4px;font:normal 11px 'Liberation Sans',sans-serif;line-height:14px;letter-spacing:-0.079px;color:#000;white-space:nowrap;">ByBlock</span>
<div class="abs" style="left:31px;top:385px;width:262px;height:19px;border:1px solid #a6a6a6;background:#f0f0f0"></div><i class="abs" style="left:161px;top:386px;width:1px;height:18px;background:#a6a6a6"></i><span class="abs" style="left:36.8px;top:386.4px;font:normal 11px 'Liberation Sans',sans-serif;line-height:14px;letter-spacing:-0.132px;color:#000;white-space:nowrap;">Wyświetlanie cieni</span><span class="abs" style="left:166.5px;top:386.4px;font:normal 11px 'Liberation Sans',sans-serif;line-height:14px;letter-spacing:-0.137px;color:#a3a3a3;white-space:nowrap;">Rzuca i uzyskuje cienie</span>
<div class="abs" style="left:16px;top:407px;width:277px;height:19px;background:#d8d8d8;border:1px solid #a6a6a6"></div><span class="abs" style="left:22.1px;top:408.5px;font:bold 12px 'Liberation Sans',sans-serif;line-height:16px;letter-spacing:-0.132px;color:#000;white-space:nowrap;">Styl wydruku</span><i class="abs" style="left:279px;top:413px;width:0;height:0;border-left:4px solid transparent;border-right:4px solid transparent;border-bottom:5px solid #000"></i>
<div class="abs" style="left:31px;top:425px;width:262px;height:19px;border:1px solid #a6a6a6;background:#f0f0f0"></div><i class="abs" style="left:161px;top:426px;width:1px;height:18px;background:#a6a6a6"></i><span class="abs" style="left:36.8px;top:426.4px;font:normal 11px 'Liberation Sans',sans-serif;line-height:14px;letter-spacing:-0.205px;color:#000;white-space:nowrap;">Styl wydruku</span><span class="abs" style="left:166.5px;top:426.4px;font:normal 11px 'Liberation Sans',sans-serif;line-height:14px;letter-spacing:-0.275px;color:#a3a3a3;white-space:nowrap;">ByColor</span>
<div class="abs" style="left:31px;top:443px;width:262px;height:19px;border:1px solid #a6a6a6;background:#f0f0f0"></div><i class="abs" style="left:161px;top:444px;width:1px;height:18px;background:#a6a6a6"></i><span class="abs" style="left:36.8px;top:444.4px;font:normal 11px 'Liberation Sans',sans-serif;line-height:14px;letter-spacing:-0.076px;color:#000;white-space:nowrap;">Tabelka stylów wydruku</span><span class="abs" style="left:166.5px;top:444.4px;font:normal 11px 'Liberation Sans',sans-serif;line-height:14px;letter-spacing:-0.124px;color:#000;white-space:nowrap;">Monochrome.ctb</span>
<div class="abs" style="left:31px;top:461px;width:262px;height:19px;border:1px solid #a6a6a6;background:#f0f0f0"></div><i class="abs" style="left:161px;top:462px;width:1px;height:18px;background:#a6a6a6"></i><span class="abs" style="left:36.8px;top:462.4px;font:normal 11px 'Liberation Sans',sans-serif;line-height:14px;letter-spacing:0.060px;color:#000;white-space:nowrap;">Tabelka wydruku dołąc...</span><span class="abs" style="left:166.5px;top:462.4px;font:normal 11px 'Liberation Sans',sans-serif;line-height:14px;letter-spacing:-0.154px;color:#a3a3a3;white-space:nowrap;">Model</span>
<div class="abs" style="left:31px;top:479px;width:262px;height:19px;border:1px solid #a6a6a6;background:#f0f0f0"></div><i class="abs" style="left:161px;top:480px;width:1px;height:18px;background:#a6a6a6"></i><span class="abs" style="left:36.8px;top:480.4px;font:normal 11px 'Liberation Sans',sans-serif;line-height:14px;letter-spacing:-0.147px;color:#000;white-space:nowrap;">Rodzaj tabelki wydruku</span><span class="abs" style="left:166.5px;top:480.4px;font:normal 11px 'Liberation Sans',sans-serif;line-height:14px;letter-spacing:-0.191px;color:#a3a3a3;white-space:nowrap;">Styl wydruku zależny od...</span>
<div class="abs" style="left:16px;top:501px;width:277px;height:19px;background:#d8d8d8;border:1px solid #a6a6a6"></div><span class="abs" style="left:22.1px;top:502.5px;font:bold 12px 'Liberation Sans',sans-serif;line-height:16px;letter-spacing:0.242px;color:#000;white-space:nowrap;">Widok</span><i class="abs" style="left:279px;top:507px;width:0;height:0;border-left:4px solid transparent;border-right:4px solid transparent;border-bottom:5px solid #000"></i>
<div class="abs" style="left:31px;top:519px;width:262px;height:19px;border:1px solid #a6a6a6;background:#f0f0f0"></div><i class="abs" style="left:161px;top:520px;width:1px;height:18px;background:#a6a6a6"></i><span class="abs" style="left:36.8px;top:520.4px;font:normal 11px 'Liberation Sans',sans-serif;line-height:14px;letter-spacing:-0.044px;color:#000;white-space:nowrap;">Środek X</span><span class="abs" style="left:166.5px;top:520.4px;font:normal 11px 'Liberation Sans',sans-serif;line-height:14px;letter-spacing:-0.092px;color:#000;white-space:nowrap;">-19.5899</span>
<div class="abs" style="left:31px;top:537px;width:262px;height:19px;border:1px solid #a6a6a6;background:#f0f0f0"></div><i class="abs" style="left:161px;top:538px;width:1px;height:18px;background:#a6a6a6"></i><span class="abs" style="left:36.8px;top:538.4px;font:normal 11px 'Liberation Sans',sans-serif;line-height:14px;letter-spacing:-0.020px;color:#000;white-space:nowrap;">Środek Y</span><span class="abs" style="left:166.5px;top:538.4px;font:normal 11px 'Liberation Sans',sans-serif;line-height:14px;letter-spacing:-0.092px;color:#000;white-space:nowrap;">-30.9646</span>
<div class="abs" style="left:31px;top:555px;width:262px;height:19px;border:1px solid #a6a6a6;background:#f0f0f0"></div><i class="abs" style="left:161px;top:556px;width:1px;height:18px;background:#a6a6a6"></i><span class="abs" style="left:36.8px;top:556.4px;font:normal 11px 'Liberation Sans',sans-serif;line-height:14px;letter-spacing:0.032px;color:#000;white-space:nowrap;">Środek Z</span><span class="abs" style="left:166.5px;top:556.4px;font:normal 11px 'Liberation Sans',sans-serif;line-height:14px;letter-spacing:0.575px;color:#000;white-space:nowrap;">0</span>
<div class="abs" style="left:31px;top:573px;width:262px;height:19px;border:1px solid #a6a6a6;background:#f0f0f0"></div><i class="abs" style="left:161px;top:574px;width:1px;height:18px;background:#a6a6a6"></i><span class="abs" style="left:36.8px;top:574.4px;font:normal 11px 'Liberation Sans',sans-serif;line-height:14px;letter-spacing:-0.162px;color:#000;white-space:nowrap;">Szerokość</span><span class="abs" style="left:166.5px;top:574.4px;font:normal 11px 'Liberation Sans',sans-serif;line-height:14px;letter-spacing:0.039px;color:#a3a3a3;white-space:nowrap;">664.7912</span>
<div class="abs" style="left:31px;top:591px;width:262px;height:19px;border:1px solid #a6a6a6;background:#f0f0f0"></div><i class="abs" style="left:161px;top:592px;width:1px;height:18px;background:#a6a6a6"></i><span class="abs" style="left:36.8px;top:592.4px;font:normal 11px 'Liberation Sans',sans-serif;line-height:14px;letter-spacing:-0.016px;color:#000;white-space:nowrap;">Wysokość</span><span class="abs" style="left:166.5px;top:592.4px;font:normal 11px 'Liberation Sans',sans-serif;line-height:14px;letter-spacing:0.039px;color:#a3a3a3;white-space:nowrap;">293.2159</span>
<div class="abs" style="left:16px;top:613px;width:277px;height:19px;background:#d8d8d8;border:1px solid #a6a6a6"></div><span class="abs" style="left:22.1px;top:614.5px;font:bold 12px 'Liberation Sans',sans-serif;line-height:16px;letter-spacing:0.220px;color:#000;white-space:nowrap;">Różne</span><i class="abs" style="left:279px;top:619px;width:0;height:0;border-left:4px solid transparent;border-right:4px solid transparent;border-bottom:5px solid #000"></i>
<div class="abs" style="left:31px;top:631px;width:262px;height:19px;border:1px solid #a6a6a6;background:#f0f0f0"></div><i class="abs" style="left:161px;top:632px;width:1px;height:18px;background:#a6a6a6"></i><span class="abs" style="left:36.8px;top:632.4px;font:normal 11px 'Liberation Sans',sans-serif;line-height:14px;letter-spacing:-0.081px;color:#000;white-space:nowrap;">Skala adnotacji</span><span class="abs" style="left:166.5px;top:632.4px;font:normal 11px 'Liberation Sans',sans-serif;line-height:14px;letter-spacing:0.134px;color:#000;white-space:nowrap;">1:1</span>
<div class="abs" style="left:0;top:645px;width:300px;height:8px;background:#f0f0f0;border-top:1px solid #f0f0f0;box-shadow:inset 0 1px 0 #b4b4b4"></div>
<div class="abs" style="left:304px;top:137px;width:1062px;height:25px;background:#fff;border-top:1px solid #bdbdbd"></div>
<div class="abs" style="left:1365px;top:138px;width:1px;height:510px;background:#a8a8a8"></div>
<svg class="abs" style="left:308px;top:138px;" width="1057" height="23" viewBox="0 0 1057 23"><rect x="960" y="0" width="97" height="21" fill="#f0f0f0"/><line x1="0" y1="20.5" x2="1057" y2="20.5" stroke="#d4d4d4"/><path d="M590.2 20.5 L599.0 4.5 Q600.0 2.5 603.5 2.5 L673.5 2.5 Q679.0 2.5 681.5 7 L688.8 20.5" fill="#fff" stroke="#c0c0c0" stroke-width="1"/><path d="M353.5 20.5 L362.3 4.5 Q363.3 2.5 366.8 2.5 L582.0 2.5 Q587.5 2.5 590.0 7 L597.3 20.5" fill="#fff" stroke="#c0c0c0" stroke-width="1"/><path d="M101.6 20.5 L110.4 4.5 Q111.4 2.5 114.9 2.5 L345.7 2.5 Q351.2 2.5 353.7 7 L361.0 20.5" fill="#fff" stroke="#c0c0c0" stroke-width="1"/><path d="M12.5 20.5 L21.3 4.5 Q22.3 2.5 25.8 2.5 L95.4 2.5 Q100.9 2.5 103.4 7 L110.7 20.5" fill="#fff" stroke="#c0c0c0" stroke-width="1"/><path d="M679.7 20.5 L688.5 4.5 Q689.5 2.5 693.0 2.5 L963.2 2.5 Q968.7 2.5 971.2 7 L978.5 20.5" fill="#fff" stroke="#8e8e8e" stroke-width="1"/><line x1="680.5" y1="20.5" x2="978.2" y2="20.5" stroke="#fff" stroke-width="1.5"/><path d="M7.5 6 L2.5 10.5 L7.5 15 Z" fill="none" stroke="#555" stroke-width="1"/><path d="M1040.5 6 L1045.5 10.5 L1040.5 15 Z" fill="none" stroke="#555" stroke-width="1"/></svg>
<span class="abs" style="left:331.6px;top:141.5px;font:normal 11.8px 'Liberation Sans',sans-serif;line-height:15px;letter-spacing:-0.158px;color:#000;white-space:nowrap;">Rysunek1.dwg</span>
<span class="abs" style="left:420.7px;top:141.5px;font:normal 11.8px 'Liberation Sans',sans-serif;line-height:15px;letter-spacing:-0.060px;color:#000;white-space:nowrap;">Gradient Hatches.dwg (tylko do przeglądania)</span>
<span class="abs" style="left:672.6px;top:141.5px;font:normal 11.8px 'Liberation Sans',sans-serif;line-height:15px;letter-spacing:0.067px;color:#000;white-space:nowrap;">Motor Outline.dwg (tylko do przeglądania)</span>
<span class="abs" style="left:909.3px;top:141.5px;font:normal 11.8px 'Liberation Sans',sans-serif;line-height:15px;letter-spacing:-0.124px;color:#000;white-space:nowrap;">Rysunek2.dwg</span>
<span class="abs" style="left:998.8px;top:141.5px;font:bold 11.4px 'Liberation Sans',sans-serif;line-height:15px;letter-spacing:-0.199px;color:#000;white-space:nowrap;">Mechs2_3D_Component.dwg (tylko do przeglądania)</span>
<div class="abs" style="left:308px;top:161px;width:1054px;height:465px;background:#000;border-left:1px solid #8c8c8c;border-top:1px solid #8c8c8c"></div>
<div class="abs" style="left:1362px;top:159px;width:3px;height:489px;background:#fff"></div>
<div id="viewport">
<svg class="abs" style="left:0;top:0" width="1053" height="464" viewBox="309 162 1053 464"><defs>
<linearGradient id="gRim" gradientUnits="userSpaceOnUse" x1="745" y1="245" x2="808" y2="290"><stop offset="0" stop-color="#a2a2a2"/><stop offset=".45" stop-color="#8c8c8c"/><stop offset=".75" stop-color="#4e4e4e"/><stop offset="1" stop-color="#282828"/></linearGradient>
<linearGradient id="gRod" gradientUnits="userSpaceOnUse" x1="736" y1="400" x2="782" y2="411"><stop offset="0" stop-color="#242424"/><stop offset=".3" stop-color="#323232"/><stop offset=".7" stop-color="#222"/><stop offset="1" stop-color="#080808"/></linearGradient>
<linearGradient id="gCyl" gradientUnits="userSpaceOnUse" x1="668" y1="540" x2="770" y2="565"><stop offset="0" stop-color="#5c9fbc"/><stop offset=".2" stop-color="#68b2ce"/><stop offset=".55" stop-color="#5b9eba"/><stop offset=".74" stop-color="#3d748c"/><stop offset=".9" stop-color="#1b3440"/><stop offset="1" stop-color="#14262e"/></linearGradient>
<linearGradient id="gCorner" gradientUnits="userSpaceOnUse" x1="786" y1="500" x2="812" y2="507"><stop offset="0" stop-color="#63a8c4"/><stop offset=".5" stop-color="#3f7890"/><stop offset="1" stop-color="#15262e"/></linearGradient>
<linearGradient id="gFrontL" gradientUnits="userSpaceOnUse" x1="624" y1="440" x2="660" y2="450"><stop offset="0" stop-color="#6cb6d2"/><stop offset="1" stop-color="#63a8c4"/></linearGradient>
<linearGradient id="gGreenL" gradientUnits="userSpaceOnUse" x1="636" y1="405" x2="665" y2="415"><stop offset="0" stop-color="#9fd400"/><stop offset="1" stop-color="#8dbf00"/></linearGradient>
<linearGradient id="gBoss" gradientUnits="userSpaceOnUse" x1="685" y1="295" x2="705" y2="320"><stop offset="0" stop-color="#98cb00"/><stop offset=".6" stop-color="#86b400"/><stop offset="1" stop-color="#6f9700"/></linearGradient>
<linearGradient id="gDisc" gradientUnits="userSpaceOnUse" x1="800" y1="240" x2="830" y2="262"><stop offset="0" stop-color="#b5b5b5"/><stop offset=".5" stop-color="#777"/><stop offset="1" stop-color="#2a2a2a"/></linearGradient>
<linearGradient id="gPin" x1="0" y1="0" x2="1" y2="0"><stop offset="0" stop-color="#fff"/><stop offset=".5" stop-color="#d0d0d0"/><stop offset="1" stop-color="#555"/></linearGradient>
<linearGradient id="gScrew" gradientUnits="userSpaceOnUse" x1="649" y1="390" x2="677" y2="396"><stop offset="0" stop-color="#f4f4f4"/><stop offset=".45" stop-color="#c8c8c8"/><stop offset="1" stop-color="#4a4a4a"/></linearGradient>
<linearGradient id="gHole" x1="0" y1="0" x2="1" y2="0"><stop offset="0" stop-color="#1d3a48"/><stop offset="1" stop-color="#6fbad6"/></linearGradient>
<linearGradient id="gHoleRing" x1="0" y1="1" x2="1" y2="0"><stop offset="0" stop-color="#555"/><stop offset=".5" stop-color="#999"/><stop offset="1" stop-color="#fff"/></linearGradient>
<path id="link" d="M722.5 286.4 A39.5 39.5 0 1 1 764 326.9 A30 30 0 0 0 733.5 356 A37.5 37.5 0 1 1 694.1 317.5 A30 30 0 0 0 722.5 286.4 Z"/>
</defs><ellipse cx="796" cy="262.5" rx="35" ry="38.5" fill="url(#gDisc)"/>
<ellipse cx="790.5" cy="263.5" rx="33.5" ry="36.5" fill="#a4a4a4"/>
<ellipse cx="721.5" cy="194" rx="6.5" ry="14.5" fill="url(#gPin)" transform="rotate(8 721.5 194)"/>
<polygon points="733,330 806,300 824,340 792,370 778,430 734,425 700,424 696,444 725,399" fill="#1c2800" stroke="#1c2800" stroke-width=".8" stroke-linejoin="round"/>
<polygon points="717.5,189 757.7,192.9 760.8,224.7 798.8,265.2 801.3,309.3 804.2,359 791.3,369.5 753.3,366.6 741,353.2 741,340 725,300 720.4,240" fill="#8dbf00" stroke="#8dbf00" stroke-width=".8" stroke-linejoin="round"/>
<polygon points="736.2,173 776.8,175.3 757.7,192.9 717.5,189" fill="#85b400" stroke="#85b400" stroke-width=".8" stroke-linejoin="round"/>
<polygon points="776.8,175.3 757.7,192.9 760.8,224.7 764,227.5 761.5,194.3 774.3,181.4" fill="#2b3900" stroke="#2b3900" stroke-width=".8" stroke-linejoin="round"/>
<polygon points="760.8,224.7 777.2,235.2 790.9,221.2 817.6,250 798.8,265.2" fill="#5f8100" stroke="#5f8100" stroke-width=".8" stroke-linejoin="round"/>
<polygon points="798.8,265.2 817.6,250 821.2,290 824.1,340.3 808.9,355 804.2,359 801.3,309.3" fill="#1e2b00" stroke="#1e2b00" stroke-width=".8" stroke-linejoin="round"/>
<polygon points="806,308.7 817.1,300 819.4,345 808.9,355" fill="#8dbf00" stroke="#8dbf00" stroke-width=".8" stroke-linejoin="round"/>
<polygon points="760.4,194.3 774.3,181.4 788.3,182.6 775.2,194.8" fill="#5a9ab5" stroke="#5a9ab5" stroke-width=".8" stroke-linejoin="round"/>
<polygon points="761,194.3 775.2,194.8 777.4,235 773.7,235.8 763.2,226.6" fill="#62a8c5" stroke="#62a8c5" stroke-width=".8" stroke-linejoin="round"/>
<polygon points="775.2,194.8 788.3,182.6 789.6,196 790.9,224.7 777.6,235.2" fill="#15272f" stroke="#15272f" stroke-width=".8" stroke-linejoin="round"/>
<polygon points="787,194 789.6,194 789.6,197 787,197" fill="#62a8c5" stroke="#62a8c5" stroke-width=".8" stroke-linejoin="round"/><polygon points="783,226 786,223.5 786,228 783,230" fill="#62a8c5"/>
<ellipse cx="773.8" cy="215.5" rx="3.2" ry="4.6" fill="url(#gPin)"/>
<path d="M724 285.5 Q710 287 700.4 295.2 L661.2 336.8 L661 350 L705 330 L726 300 Z" fill="url(#gBoss)"/>
<polygon points="639.3,396.9 649.3,385.2 662,368 735,372 725.9,399.3 700.2,424.4" fill="#7ea900" stroke="#7ea900" stroke-width=".8" stroke-linejoin="round"/>
<polygon points="685.5,389.9 725.3,400.4 732,378 700,372" fill="#8dbf00" stroke="#8dbf00" stroke-width=".8" stroke-linejoin="round"/>
<polygon points="639.3,396.9 700.2,424.4 696.1,443.7 634.6,416.2" fill="url(#gGreenL)" stroke="#8dbf00" stroke-width=".8"/>
<polygon points="700.2,424.4 725.9,399.3 733,372 748,372 734.1,409.8 696.1,443.7" fill="#1e2b00" stroke="#1e2b00" stroke-width=".8" stroke-linejoin="round"/>
<path d="M734.1 409.8 L785.5 388.7 L867.5 421.3 Q874 424.5 872.3 429.4 L815 481.5 Q811.5 484.8 806 482.4 L696.1 443.7 Z" fill="#5a93ab" stroke="#5a93ab" stroke-width=".8" stroke-linejoin="round"/>
<polygon points="812.6,483.2 872.6,428.5 859.4,478.5 846.7,490 802,531 796,531" fill="#15262e" stroke="#15262e" stroke-width=".8" stroke-linejoin="round"/>
<ellipse cx="708.5" cy="598.6" rx="46.5" ry="24.5" transform="rotate(13.8 708.5 598.6)" fill="url(#gCyl)"/>
<ellipse cx="709.9" cy="592.8" rx="49.7" ry="26" transform="rotate(13.8 709.9 592.8)" fill="url(#gCyl)"/>
<path d="M684.5 487 L661.6 581 L758.1 604.7 L777.5 526 Z" fill="url(#gCyl)"/>
<path d="M634.6 416.2 L696.1 443.7 L810.2 483.8 L802 531 L781 531 L683.8 493.3 L626.4 470.4 Q621 467 622.3 463.4 L624.7 456 Z" fill="#63a8c4" stroke="#63a8c4" stroke-width="1"/>
<polygon points="634.6,416.2 660,427.5 650,480 626.4,470.4 622.3,463.4 624.7,456" fill="url(#gFrontL)"/>
<path d="M786 475.3 L810.2 483.8 Q813 484.5 812.4 487 L803.5 529 Q802.5 531.5 799 531.5 L781 531 L776 529 Z" fill="url(#gCorner)"/>
<circle cx="686.1" cy="468.1" r="14" fill="#2c2c2c"/>
<polygon points="680.1,467.1 684.6,463.6 687.6,466.6 683.1,471.1" fill="#0f0f0f" stroke="#0f0f0f" stroke-width=".8" stroke-linejoin="round"/>
<circle cx="738" cy="488" r="14" fill="#2c2c2c"/>
<polygon points="732,487 736.5,483.5 739.5,486.5 735,491" fill="#0f0f0f" stroke="#0f0f0f" stroke-width=".8" stroke-linejoin="round"/>
<ellipse cx="808.4" cy="414.2" rx="6.5" ry="3" fill="url(#gHole)" transform="rotate(14 808.4 414.2)"/>
<ellipse cx="853.4" cy="423.3" rx="9.5" ry="4.6" fill="url(#gHole)" transform="rotate(14 853.4 423.3)"/>
<ellipse cx="823" cy="431.9" rx="6.3" ry="3" fill="url(#gHole)" transform="rotate(14 823 431.9)"/>
<ellipse cx="797.4" cy="454.9" rx="6.5" ry="3" fill="url(#gHole)" transform="rotate(14 797.4 454.9)"/>
<ellipse cx="797.4" cy="474.8" rx="9.5" ry="5" fill="url(#gHole)" transform="rotate(14 797.4 474.8)"/>
<path d="M746.5 358 L753.3 366.6 L791.3 369.5 L776.2 428.5 Q771 432.3 758 431.5 Q735 430 732.3 416.8 Z" fill="url(#gRod)"/>
<path d="M745 379 Q756 394 775 389 L776.5 381 Q758 385 746 375 Z" fill="#3b3b3b" opacity=".8"/>
<ellipse cx="766.6" cy="344.6" rx="15.8" ry="16.4" fill="#232323"/>
<ellipse cx="765" cy="344.4" rx="15" ry="16.2" fill="#2e2e2e"/>
<use href="#link" transform="translate(3.3 -1.5)" fill="#2b2b2b"/>
<use href="#link" transform="translate(2.75 -1.25)" fill="#2b2b2b"/>
<use href="#link" transform="translate(2.2 -1)" fill="#2b2b2b"/>
<use href="#link" transform="translate(1.65 -0.75)" fill="#2b2b2b"/>
<use href="#link" transform="translate(1.1 -0.5)" fill="#2b2b2b"/>
<use href="#link" transform="translate(0.55 -0.25)" fill="#2b2b2b"/>
<circle cx="768.65" cy="282.25" r="39.5" fill="url(#gRim)"/>
<circle cx="767.7" cy="283" r="39.5" fill="url(#gRim)"/>
<circle cx="766.75" cy="283.75" r="39.5" fill="url(#gRim)"/>
<circle cx="765.8" cy="284.5" r="39.5" fill="url(#gRim)"/>
<circle cx="764.85" cy="285.25" r="39.5" fill="url(#gRim)"/>
<circle cx="763.9" cy="286" r="39.5" fill="url(#gRim)"/>
<circle cx="762.95" cy="286.75" r="39.5" fill="url(#gRim)"/>
<path d="M716.5 303 A30 30 0 0 1 694.1 317.5 A37.5 37.5 0 0 0 667 331" fill="none" stroke="#8e8e8e" stroke-width="3.4" stroke-linecap="round" transform="translate(-0.6 -1.2)"/>
<use href="#link" fill="#a6a6a6"/>
<ellipse cx="760.9" cy="290.3" rx="20.2" ry="21" fill="url(#gHoleRing)"/><ellipse cx="759.9" cy="291.5" rx="19.4" ry="20.2" fill="#2f2f2f"/>
<ellipse cx="697" cy="354.6" rx="20.6" ry="20.6" fill="url(#gHoleRing)" opacity=".8"/><ellipse cx="695.6" cy="355.4" rx="19.8" ry="19.9" fill="#2f2f2f"/>
<path d="M649 384 L651.5 399 Q661 407.5 674 402.5 L677 386 Z" fill="url(#gScrew)"/>
<ellipse cx="663" cy="383.5" rx="14" ry="7" fill="#e9e9e9" transform="rotate(8 663 383.5)"/>
<ellipse cx="664" cy="384" rx="8.5" ry="4.6" fill="#9b9b9b" transform="rotate(8 664 384)"/>
<path d="M655.5 382.5 L659 379.8 L659 385 Z" fill="#333" stroke="#333" stroke-width=".8" stroke-linejoin="round"/><path d="M668 382 L672.5 386 L668.5 388 Z" fill="#f4f4f4"/>
<path d="M631.5 473.5 L627 485.5 Q632 494 645 492 L648 480 Z" fill="url(#gPin)"/>
<line x1="802.5" y1="393.4" x2="779.6" y2="481.4" stroke="#3fe03f" stroke-width="1"/>
<line x1="802.5" y1="393.4" x2="803" y2="391.5" stroke="#1a6fe8" stroke-width="1"/>
<line x1="746.3" y1="419.7" x2="773.3" y2="430.3" stroke="#18b818" stroke-width="1"/>
<line x1="773.3" y1="430.3" x2="836.6" y2="454.4" stroke="#5a14c8" stroke-width="1.2"/>
<path d="M773.3 452.5 L786 441 L789 439 M792 434.5 L796 432 L809 420.9" stroke="#c08aa0" stroke-width="1" fill="none"/>
<rect x="787.2" y="433.7" width="6" height="6" fill="none" stroke="#c87850" stroke-width="1"/>
<circle cx="835" cy="394" r="180.5" fill="none" stroke="#0a9a0a" stroke-width="1"/>
<circle cx="835" cy="213.5" r="9" fill="none" stroke="#0a9a0a" stroke-width="1"/>
<circle cx="835" cy="574.5" r="9" fill="none" stroke="#0a9a0a" stroke-width="1"/>
<circle cx="654.5" cy="394" r="9" fill="none" stroke="#0a9a0a" stroke-width="1"/>
<circle cx="1015.5" cy="394" r="9" fill="none" stroke="#0a9a0a" stroke-width="1"/>
<line x1="383.4" y1="599.3" x2="395.4" y2="586" stroke="#c01010" stroke-width="3.2" stroke-linecap="round"/>
<line x1="383.4" y1="598.5" x2="351.5" y2="586.3" stroke="#20c820" stroke-width="3.2" stroke-linecap="round"/>
<line x1="383.4" y1="598" x2="390.8" y2="567.5" stroke="#1c74dc" stroke-width="3.2" stroke-linecap="round"/>
<text x="382.4" y="559.4" font-family="Liberation Sans,sans-serif" font-size="14.2" fill="#1c74dc" textLength="10" lengthAdjust="spacingAndGlyphs">Z</text>
<text x="337.6" y="584" font-family="Liberation Sans,sans-serif" font-size="12.4" fill="#18a818">Y</text>
<text x="388.8" y="585.4" font-family="Liberation Sans,sans-serif" font-size="12.8" fill="#d01818">X</text></svg>
</div>
<div class="abs" style="left:309px;top:626px;width:1053px;height:18px;background:#f0f0f0"></div>
<div class="abs" style="left:304px;top:644px;width:1061px;height:4px;background:#f0f0f0"></div>
<div class="abs" style="left:304px;top:161px;width:4px;height:483px;background:#ebebeb"></div>
<svg class="abs" style="left:309px;top:626px;" width="200" height="17" viewBox="0 0 200 17"><rect x="0.5" y="0.5" width="15" height="15" fill="#f0f0f0" stroke="#a0a0a0"/><path d="M1.5 15 V1.500 H14.5" stroke="#fff" fill="none"/><path d="M1 15.500 H15.5 V1" stroke="#6e6e6e" fill="none"/><rect x="16.5" y="0.5" width="15" height="15" fill="#f0f0f0" stroke="#a0a0a0"/><path d="M17.5 15 V1.500 H30.5" stroke="#fff" fill="none"/><path d="M17 15.500 H31.5 V1" stroke="#6e6e6e" fill="none"/><rect x="32.5" y="0.5" width="15" height="15" fill="#f0f0f0" stroke="#a0a0a0"/><path d="M33.5 15 V1.500 H46.5" stroke="#fff" fill="none"/><path d="M33 15.500 H47.5 V1" stroke="#6e6e6e" fill="none"/><rect x="48.5" y="0.5" width="15" height="15" fill="#f0f0f0" stroke="#a0a0a0"/><path d="M49.5 15 V1.500 H62.5" stroke="#fff" fill="none"/><path d="M49 15.500 H63.5 V1" stroke="#6e6e6e" fill="none"/><path d="M4.5 4 V12 M11 4 L6 8 L11 12 Z" stroke="#000" fill="#000" stroke-width="1.3"/><path d="M27 4 L22 8 L27 12 Z" fill="#000"/><path d="M37 4 L42 8 L37 12 Z" fill="#000"/><path d="M59.5 4 V12 M53 4 L58 8 L53 12 Z" stroke="#000" fill="#000" stroke-width="1.3"/><path d="M65 0 L72 15.5 L111.5 15.5 L118 0 Z" fill="#fff" stroke="none"/><path d="M65 0 L72 15.5 L111.5 15.5 L118 0" fill="none" stroke="#000" stroke-width="1"/><path d="M113.5 12 L120 15.5 L170 15.5 L177.5 0" fill="none" stroke="#000" stroke-width="1"/></svg>
<span class="abs" style="left:384.1px;top:626.5px;font:bold 11.5px 'Liberation Sans',sans-serif;line-height:15px;letter-spacing:0.033px;color:#000;white-space:nowrap;">Model</span>
<span class="abs" style="left:434.7px;top:626.5px;font:normal 11.3px 'Liberation Sans',sans-serif;line-height:15px;letter-spacing:-0.286px;color:#000;white-space:nowrap;">Layout1</span>
<div class="abs" style="left:0;top:647.500px;width:1366px;height:5px;background:linear-gradient(#fdfdfd 0,#fdfdfd 25%,#dcdcdc 40%,#c6c6c6 100%)"></div>
<div class="abs" style="left:1px;top:653px;width:18px;height:59px;background:#ababab"></div>
<div class="abs" style="left:20px;top:652px;width:1345px;height:59px;background:#fff;border-top:2px solid #767676;border-left:2px solid #767676"></div>
<div class="abs" style="left:21px;top:690px;width:1344px;height:1px;background:#6e6e6e"></div>
<div class="abs" style="left:1348px;top:654px;width:16px;height:35px;background:#f0f0f0"></div>
<svg class="abs" style="left:1348px;top:654px;" width="16" height="35" viewBox="0 0 16 35"><path d="M4 12 L7.5 8 L11 12 M4 25 L7.5 29 L11 25" fill="none" stroke="#444" stroke-width="1.6"/></svg>
<svg class="abs" style="left:1px;top:653px;" width="18" height="59" viewBox="0 0 18 59"><path d="M5.5 5.5 L12.5 12.5 M12.5 5.5 L5.5 12.5" stroke="#555" stroke-width="1.1" fill="none"/><path d="M7.5 24.500 H11.500 V29 H7.500 Z M10.500 24.500 V29 M6 29.500 H13 M9.500 30 V33.500" stroke="#555" stroke-width="1" fill="none"/></svg>
<span class="abs" style="left:23px;top:654px;font:13.33px 'Liberation Mono',monospace;line-height:14px;white-space:pre;color:#000">Plik Wersja: R21 (2007) release</span>
<span class="abs" style="left:23px;top:668px;font:13.33px 'Liberation Mono',monospace;line-height:14px;white-space:pre;color:#000">Polecenie:</span>
<span class="abs" style="left:25.5px;top:693.8px;font:11.7px 'Liberation Mono',monospace;line-height:14px;white-space:pre;color:#000;-webkit-text-stroke:0.35px #000">Polecenie:</span>
<div class="abs" style="left:0;top:711px;width:1370px;height:2px;background:#f0f0f0"></div>
<div class="abs" style="left:0;top:713px;width:1366px;height:22px;background:#dbdbdb;border-top:1px solid #c4c4c4"></div>
<span class="abs" style="left:4.1px;top:718.5px;font:normal 11.2px 'Liberation Sans',sans-serif;line-height:15px;letter-spacing:0.397px;color:#000;white-space:nowrap;">Wzniesienie podłogi=0</span>
<i class="abs" style="left:722px;top:715px;width:1px;height:20px;background:#b9b9b9"></i>
<i class="abs" style="left:730px;top:715px;width:1px;height:20px;background:#b9b9b9"></i>
<i class="abs" style="left:876px;top:715px;width:1px;height:20px;background:#b9b9b9"></i>
<i class="abs" style="left:925px;top:715px;width:1px;height:20px;background:#b9b9b9"></i>
<i class="abs" style="left:956px;top:715px;width:1px;height:20px;background:#b9b9b9"></i>
<i class="abs" style="left:985px;top:715px;width:1px;height:20px;background:#b9b9b9"></i>
<i class="abs" style="left:1016px;top:715px;width:1px;height:20px;background:#b9b9b9"></i>
<i class="abs" style="left:1045px;top:715px;width:1px;height:20px;background:#b9b9b9"></i>
<i class="abs" style="left:1075px;top:715px;width:1px;height:20px;background:#b9b9b9"></i>
<i class="abs" style="left:1106px;top:715px;width:1px;height:20px;background:#b9b9b9"></i>
<i class="abs" style="left:1136px;top:715px;width:1px;height:20px;background:#b9b9b9"></i>
<i class="abs" style="left:1166px;top:715px;width:1px;height:20px;background:#b9b9b9"></i>
<i class="abs" style="left:1196px;top:715px;width:1px;height:20px;background:#b9b9b9"></i>
<i class="abs" style="left:1253px;top:715px;width:1px;height:20px;background:#b9b9b9"></i>
<i class="abs" style="left:1284px;top:715px;width:1px;height:20px;background:#b9b9b9"></i>
<i class="abs" style="left:1313px;top:715px;width:1px;height:20px;background:#b9b9b9"></i>
<i class="abs" style="left:1343px;top:715px;width:1px;height:20px;background:#b9b9b9"></i>
<span class="abs" style="left:735.1px;top:718.5px;font:normal 11.2px 'Liberation Sans',sans-serif;line-height:15px;letter-spacing:-0.159px;color:#000;white-space:nowrap;">1897.4041,177.4769,0</span>
<span class="abs" style="left:909.0px;top:718.5px;font:normal 11.2px 'Liberation Sans',sans-serif;line-height:15px;letter-spacing:-0.421px;color:#000;white-space:nowrap;">1:1</span>
<span class="abs" style="left:1200.2px;top:718.5px;font:normal 11.2px 'Liberation Sans',sans-serif;line-height:15px;letter-spacing:-0.461px;color:#000;white-space:nowrap;">MOBSZAR</span>
<svg class="abs" style="left:0;top:713px" width="1370" height="22" viewBox="0 713 1370 22"><path d="M893.7 718.3 Q894.7 724.5 896.3 728 Q900.2 731 901.5 735 Q896.7 731.5 893.7 731.1 Q890.7 731.5 885.9 735 Q887.2 731 891.1 728 Q892.7 724.5 893.7 718.3 Z" fill="#fff" stroke="#8a8a8a" stroke-width="1" stroke-linejoin="round"/><defs><filter id="bl" x="-30%" y="-30%" width="160%" height="160%"><feGaussianBlur stdDeviation="0.9"/></filter></defs><g filter="url(#bl)"><path d="M941 718.3 Q942 724.5 943.6 728 Q947.5 731 948.8 735 Q944 731.5 941 731.1 Q938 731.5 933.2 735 Q934.5 731 938.4 728 Q940 724.5 941 718.3 Z" fill="#5468f0" stroke="#7a8af8" stroke-width="2.2" stroke-linejoin="round"/></g><circle cx="947.500" cy="729" r="3.400" fill="#f8e000" stroke="#c8a800" stroke-width=".6"/><rect x="946.300" y="732" width="2.400" height="3" fill="#c8a800"/><path d="M971.5 718.3 Q972.5 724.5 974.1 728 Q978 731 979.3 735 Q974.5 731.5 971.5 731.1 Q968.5 731.5 963.7 735 Q965 731 968.9 728 Q970.5 724.5 971.5 718.3 Z" fill="#fff" stroke="#8a8a8a" stroke-width="1" stroke-linejoin="round"/><polygon points="978.2,717.5 976.0,721.1 977.4,721.1 976.3,724.1 979.6,720.0 978.1,720.0 979.3,717.5" fill="#f8c820" stroke="#7a8a20" stroke-width=".6"/><rect x="994" y="719.2" width="2" height="2" fill="#aab0c2" transform="rotate(45 995 720.2)"/><rect x="994" y="725.3" width="2" height="2" fill="#aab0c2" transform="rotate(45 995 726.3)"/><rect x="994" y="731.4" width="2" height="2" fill="#aab0c2" transform="rotate(45 995 732.4)"/><rect x="1000.5" y="719.2" width="2" height="2" fill="#aab0c2" transform="rotate(45 1001.5 720.2)"/><rect x="1000.5" y="725.3" width="2" height="2" fill="#aab0c2" transform="rotate(45 1001.5 726.3)"/><rect x="1000.5" y="731.4" width="2" height="2" fill="#aab0c2" transform="rotate(45 1001.5 732.4)"/><rect x="1007.2" y="719.2" width="2" height="2" fill="#aab0c2" transform="rotate(45 1008.2 720.2)"/><rect x="1007.2" y="725.3" width="2" height="2" fill="#aab0c2" transform="rotate(45 1008.2 726.3)"/><rect x="1007.2" y="731.4" width="2" height="2" fill="#aab0c2" transform="rotate(45 1008.2 732.4)"/><path d="M1027.500 717 V735 M1034.200 717 V735 M1040.700 717 V735 M1022 720.200 H1044 M1022 725.800 H1044 M1022 731.400 H1044" stroke="#9ea4b6" stroke-width="1.300"/><path d="M1053 733.500 H1061.500 V727.500 H1067.500 M1069 717.500 V735" fill="none" stroke="#5b6cf2" stroke-width="3"/><circle cx="1091.500" cy="727.500" r="7.300" fill="none" stroke="#9a9a9a" stroke-width="1"/><path d="M1091.500 727.500 L1098.500 718.500 M1091.500 727.500 H1101" stroke="#e83030" stroke-width="1.100" fill="none"/><rect x="1114.500" y="720.500" width="12" height="14" fill="none" stroke="#5b6cf2" stroke-width="3"/><rect x="1125.500" y="717.500" width="4" height="4" fill="#10c030" stroke="#000" stroke-width=".8"/><path d="M1146 720.500 L1157.500 729.500 L1158 733.500 H1144" fill="none" stroke="#5b6cf2" stroke-width="3.200"/><path d="M1171 719 H1191" stroke="#a8a8a8" stroke-width="1.200"/><path d="M1171 724.500 H1191" stroke="#a0a0a0" stroke-width="2.400"/><path d="M1171 731.500 H1191" stroke="#9a9a9a" stroke-width="4"/><polygon points="1277.8,727.1 1277.3,729.5 1274.8,729.6 1273.8,731.1 1274.6,733.5 1272.6,734.8 1270.7,733.1 1269.0,733.5 1267.9,735.8 1265.5,735.3 1265.4,732.8 1263.9,731.8 1261.5,732.6 1260.2,730.6 1261.9,728.7 1261.5,727.0 1259.2,725.9 1259.7,723.5 1262.2,723.4 1263.2,721.9 1262.4,719.5 1264.4,718.2 1266.3,719.9 1268.0,719.5 1269.1,717.2 1271.5,717.7 1271.6,720.2 1273.1,721.2 1275.5,720.4 1276.8,722.4 1275.1,724.3 1275.5,726.0" fill="#5b6cf2"/><circle cx="1268.5" cy="726.5" r="3.300" fill="#dbdbdb"/><path d="M1290.500 718 V727 M1286 722.500 H1295" stroke="#3a5ae8" stroke-width="2"/><rect x="1293" y="729.500" width="18" height="6" rx="2" fill="#5b6cf2"/><ellipse cx="1295.500" cy="732.500" rx="1.500" ry="2.300" fill="#dbdbdb"/><path d="M1320 718 V735 M1320 735 L1332 724" stroke="#b4b4b4" stroke-width="1.300" fill="none"/><polygon points="1336.2,717.0 1334.0,720.6 1335.4,720.6 1334.3,723.6 1337.6,719.5 1336.1,719.5 1337.3,717.0" fill="#f8c820" stroke="#7a8a20" stroke-width=".6"/><defs><radialGradient id="gc" cx=".4" cy=".3" r=".8"><stop offset="0" stop-color="#8ae070"/><stop offset=".6" stop-color="#30a830"/><stop offset="1" stop-color="#107010"/></radialGradient></defs><circle cx="1355" cy="726.800" r="8" fill="url(#gc)" stroke="#888" stroke-width=".8"/><path d="M1350.500 727 L1354 730.500 L1360 723" fill="none" stroke="#fff" stroke-width="2.200"/></svg>


</body>
</html>
